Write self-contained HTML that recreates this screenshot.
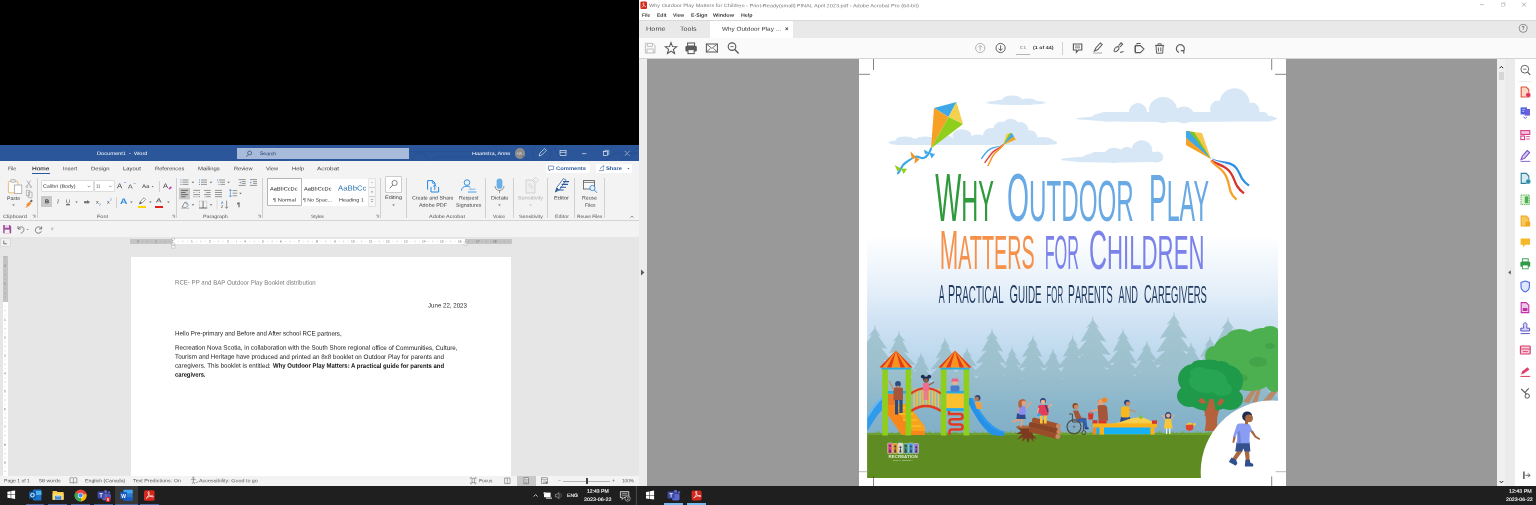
<!DOCTYPE html>
<html lang="en"><head><meta charset="utf-8"><title>Word and Acrobat</title>
<style>
html,body{margin:0;padding:0;background:#000;}
body{width:1536px;height:505px;position:relative;overflow:hidden;font-family:"Liberation Sans",sans-serif;}
#root{position:absolute;left:0;top:0;width:1536px;height:505px;overflow:hidden;will-change:transform;}
.r{position:absolute;}
.t{position:absolute;white-space:pre;line-height:1;transform-origin:0 50%;display:block;}
svg{position:absolute;left:0;top:0;overflow:visible;}
</style></head>
<body>
<div id="root">
<!-- Microsoft Word window -->
<div class="r" style="left:0px;top:145px;width:638.5px;height:16px;background:#2b579a;"></div>
<div class="r" style="left:0px;top:161px;width:638.5px;height:60px;background:#f3f3f3;"></div>
<div class="r" style="left:0px;top:220px;width:638.5px;height:0.8px;background:#d4d4d4;"></div>
<div class="r" style="left:0px;top:221px;width:638.5px;height:16.2px;background:#f3f3f3;"></div>
<div class="r" style="left:0px;top:237.2px;width:638.5px;height:238.8px;background:#e6e6e6;"></div>
<div class="r" style="left:131px;top:257px;width:380px;height:219px;background:#ffffff;"></div>
<div class="r" style="left:0px;top:476px;width:638.5px;height:10px;background:#f3f3f3;"></div>
<div class="r" style="left:0px;top:486px;width:638.5px;height:19px;background:#1f1f1f;"></div>
<span class="t" style="left:96.75px;top:151px;font-size:4.9px;color:#fff;transform:translateY(0.92px) scaleX(1.1542) rotate(0.05deg);">Document1  -  Word</span>
<div class="r" style="left:237px;top:148.3px;width:172px;height:11px;background:#a8bbdb;"></div>
<span class="t" style="left:260.00px;top:152px;font-size:4.9px;color:#1f3864;transform:translateY(0.12px) scaleX(1.0305) rotate(0.05deg);">Search</span>
<span class="t" style="left:471.50px;top:151px;font-size:4.9px;color:#fff;transform:translateY(0.92px) scaleX(1.1397) rotate(0.05deg);">Haanstra, Anne</span>
<div class="r" style="left:514.6px;top:148.4px;width:10.4px;height:10.4px;border-radius:50%;background:#8c8c8c"></div>
<span class="t" style="left:517.30px;top:152px;font-size:3.6px;color:#e8e8e8;transform:translateY(0.72px) rotate(0.05deg);">HA</span>
<span class="t" style="left:8.30px;top:166px;font-size:5.1px;color:#3b3b3b;transform:translateY(0.28px) scaleX(0.9735) rotate(0.05deg);">File</span>
<span class="t" style="left:32.00px;top:166px;font-size:5.1px;color:#1b1b1b;transform:translateY(0.28px) scaleX(1.2863) rotate(0.05deg);-webkit-text-stroke:0.08px #1b1b1b;">Home</span>
<span class="t" style="left:62.70px;top:166px;font-size:5.1px;color:#3b3b3b;transform:translateY(0.28px) scaleX(1.0976) rotate(0.05deg);">Insert</span>
<span class="t" style="left:90.80px;top:166px;font-size:5.1px;color:#3b3b3b;transform:translateY(0.28px) scaleX(1.1716) rotate(0.05deg);">Design</span>
<span class="t" style="left:122.70px;top:166px;font-size:5.1px;color:#3b3b3b;transform:translateY(0.28px) scaleX(1.1624) rotate(0.05deg);">Layout</span>
<span class="t" style="left:154.70px;top:166px;font-size:5.1px;color:#3b3b3b;transform:translateY(0.28px) scaleX(1.1234) rotate(0.05deg);">References</span>
<span class="t" style="left:197.80px;top:166px;font-size:5.1px;color:#3b3b3b;transform:translateY(0.28px) scaleX(1.1653) rotate(0.05deg);">Mailings</span>
<span class="t" style="left:233.80px;top:166px;font-size:5.1px;color:#3b3b3b;transform:translateY(0.28px) scaleX(1.1063) rotate(0.05deg);">Review</span>
<span class="t" style="left:265.80px;top:166px;font-size:5.1px;color:#3b3b3b;transform:translateY(0.28px) scaleX(1.0946) rotate(0.05deg);">View</span>
<span class="t" style="left:291.50px;top:166px;font-size:5.1px;color:#3b3b3b;transform:translateY(0.28px) scaleX(1.1440) rotate(0.05deg);">Help</span>
<span class="t" style="left:316.80px;top:166px;font-size:5.1px;color:#3b3b3b;transform:translateY(0.28px) scaleX(1.2517) rotate(0.05deg);">Acrobat</span>
<div class="r" style="left:32px;top:173.4px;width:17.8px;height:1.1px;background:#2b579a;"></div>
<div class="r" style="left:545.5px;top:163.6px;width:44.5px;height:9.6px;background:#ffffff;"></div>
<span class="t" style="left:556.00px;top:166px;font-size:5.1px;color:#2b579a;font-weight:700;transform:translateY(0.08px) scaleX(1.1383) rotate(0.05deg);">Comments</span>
<div class="r" style="left:596px;top:163.6px;width:36px;height:9.6px;background:#ffffff;"></div>
<span class="t" style="left:606.00px;top:166px;font-size:5.1px;color:#2b579a;font-weight:700;transform:translateY(0.08px) scaleX(1.1288) rotate(0.05deg);">Share</span>
<span class="t" style="left:3.00px;top:215px;font-size:4.7px;color:#555;transform:translateY(0.06px) scaleX(1.1929) rotate(0.05deg);">Clipboard</span>
<span class="t" style="left:97.00px;top:215px;font-size:4.7px;color:#555;transform:translateY(0.06px) scaleX(1.1696) rotate(0.05deg);">Font</span>
<span class="t" style="left:202.60px;top:215px;font-size:4.7px;color:#555;transform:translateY(0.06px) scaleX(1.1344) rotate(0.05deg);">Paragraph</span>
<span class="t" style="left:311.00px;top:215px;font-size:4.7px;color:#555;transform:translateY(0.06px) scaleX(1.0157) rotate(0.05deg);">Styles</span>
<span class="t" style="left:428.50px;top:215px;font-size:4.7px;color:#555;transform:translateY(0.06px) scaleX(1.1675) rotate(0.05deg);">Adobe Acrobat</span>
<span class="t" style="left:493.00px;top:215px;font-size:4.7px;color:#555;transform:translateY(0.06px) scaleX(1.0436) rotate(0.05deg);">Voice</span>
<span class="t" style="left:518.50px;top:215px;font-size:4.7px;color:#555;transform:translateY(0.06px) scaleX(1.1344) rotate(0.05deg);">Sensitivity</span>
<span class="t" style="left:554.50px;top:215px;font-size:4.7px;color:#555;transform:translateY(0.06px) scaleX(1.1402) rotate(0.05deg);">Editor</span>
<span class="t" style="left:576.50px;top:215px;font-size:4.7px;color:#555;transform:translateY(0.06px) scaleX(1.0276) rotate(0.05deg);">Reuse Files</span>
<div class="r" style="left:37.2px;top:178px;width:0.8px;height:40px;background:#d0d0d0;"></div>
<div class="r" style="left:175.6px;top:178px;width:0.8px;height:40px;background:#d0d0d0;"></div>
<div class="r" style="left:262.1px;top:178px;width:0.8px;height:40px;background:#d0d0d0;"></div>
<div class="r" style="left:380.1px;top:178px;width:0.8px;height:40px;background:#d0d0d0;"></div>
<div class="r" style="left:406.1px;top:178px;width:0.8px;height:40px;background:#d0d0d0;"></div>
<div class="r" style="left:485.1px;top:178px;width:0.8px;height:40px;background:#d0d0d0;"></div>
<div class="r" style="left:513.1px;top:178px;width:0.8px;height:40px;background:#d0d0d0;"></div>
<div class="r" style="left:547.2px;top:178px;width:0.8px;height:40px;background:#d0d0d0;"></div>
<div class="r" style="left:574.1px;top:178px;width:0.8px;height:40px;background:#d0d0d0;"></div>
<div class="r" style="left:603.9px;top:178px;width:0.8px;height:40px;background:#d0d0d0;"></div>
<span class="t" style="left:7.00px;top:195px;font-size:5px;color:#444;transform:translateY(0.95px) scaleX(1.0167) rotate(0.05deg);">Paste</span>
<div class="r" style="left:41.5px;top:181px;width:51px;height:10.3px;background:#fff;box-shadow:0 0 0 0.5px #c6c6c6;"></div>
<span class="t" style="left:43.30px;top:184px;font-size:4.8px;color:#333;transform:translateY(0.79px) scaleX(1.1178) rotate(0.05deg);">Calibri (Body)</span>
<div class="r" style="left:94.5px;top:181px;width:19px;height:10.3px;background:#fff;box-shadow:0 0 0 0.5px #c6c6c6;"></div>
<span class="t" style="left:96.20px;top:184px;font-size:4.8px;color:#333;transform:translateY(0.79px) scaleX(0.8429) rotate(0.05deg);">11</span>
<span class="t" style="left:117.00px;top:182px;font-size:7px;color:#444;transform:translateY(0.17px) scaleX(1.1137) rotate(0.05deg);">A</span>
<span class="t" style="left:128.00px;top:184px;font-size:5.8px;color:#444;transform:translateY(0.40px) scaleX(1.1890) rotate(0.05deg);">A</span>
<span class="t" style="left:142.00px;top:184px;font-size:5.6px;color:#444;transform:translateY(0.04px) scaleX(1.0949) rotate(0.05deg);">Aa</span>
<span class="t" style="left:163.00px;top:183px;font-size:6.6px;color:#444;transform:translateY(0.05px) scaleX(1.1357) rotate(0.05deg);">A</span>
<div class="r" style="left:159.2px;top:180.5px;width:0.7px;height:11px;background:#d0d0d0;"></div>
<div class="r" style="left:41px;top:196px;width:11.2px;height:11px;background:#c8c8c8;"></div>
<span class="t" style="left:44.58px;top:199px;font-size:5.6px;color:#222;font-weight:700;transform:translateY(0.34px) rotate(0.05deg);">B</span>
<span class="t" style="left:56.82px;top:199px;font-size:5.6px;color:#444;font-style:italic;transform:translateY(0.34px) rotate(0.05deg);font-family:'Liberation Serif',serif;">I</span>
<span class="t" style="left:66.05px;top:199px;font-size:5.4px;color:#444;transform:translateY(0.27px) rotate(0.05deg);text-decoration:underline;">U</span>
<span class="t" style="left:84.33px;top:200px;font-size:4.8px;color:#444;transform:translateY(0.49px) rotate(0.05deg);text-decoration:line-through;">ab</span>
<span class="t" style="left:96.00px;top:199px;font-size:5.4px;color:#444;transform:translateY(0.67px) rotate(0.05deg);">x</span>
<span class="t" style="left:99.30px;top:203px;font-size:3.2px;color:#2b7cd3;transform:translateY(0.39px) rotate(0.05deg);">2</span>
<span class="t" style="left:107.00px;top:199px;font-size:5.4px;color:#444;transform:translateY(0.67px) rotate(0.05deg);">x</span>
<span class="t" style="left:110.30px;top:198px;font-size:3.2px;color:#2b7cd3;transform:translateY(0.39px) rotate(0.05deg);">2</span>
<div class="r" style="left:116.3px;top:196.5px;width:0.7px;height:11px;background:#d0d0d0;"></div>
<span class="t" style="left:120.00px;top:197px;font-size:8px;color:#2f8be0;font-weight:700;transform:translateY(0.88px) scaleX(1.2808) rotate(0.05deg);">A</span>
<span class="t" style="left:156.00px;top:197px;font-size:6.2px;color:#444;transform:translateY(0.52px) scaleX(1.3541) rotate(0.05deg);">A</span>
<div class="r" style="left:155px;top:205.8px;width:8px;height:1.8px;background:#e0201b;"></div>
<div class="r" style="left:137.5px;top:205.8px;width:8px;height:1.8px;background:#ffd400;"></div>
<span class="t" style="left:236.53px;top:201px;font-size:6px;color:#444;font-weight:700;transform:translateY(0.46px) rotate(0.05deg);">¶</span>
<span class="t" style="left:221.00px;top:201px;font-size:3.4px;color:#2b7cd3;font-weight:700;transform:translateY(0.65px) rotate(0.05deg);">A</span>
<span class="t" style="left:221.00px;top:205px;font-size:3.4px;color:#444;font-weight:700;transform:translateY(0.65px) rotate(0.05deg);">Z</span>
<div class="r" style="left:267.7px;top:178.6px;width:107.6px;height:27px;background:#fff;"></div>
<div class="r" style="left:268px;top:179px;width:32.6px;height:26.2px;background:#fff;box-shadow:0 0 0 0.7px #9a9a9a;"></div>
<span class="t" style="left:270.40px;top:186px;font-size:5.2px;color:#222;transform:translateY(0.41px) scaleX(1.0813) rotate(0.05deg);">AaBbCcDc</span>
<span class="t" style="left:272.50px;top:198px;font-size:4.8px;color:#333;transform:translateY(0.49px) scaleX(1.1867) rotate(0.05deg);">¶ Normal</span>
<span class="t" style="left:304.00px;top:186px;font-size:5.2px;color:#222;transform:translateY(0.41px) scaleX(1.0813) rotate(0.05deg);">AaBbCcDc</span>
<span class="t" style="left:303.00px;top:198px;font-size:4.8px;color:#333;transform:translateY(0.49px) scaleX(1.1017) rotate(0.05deg);">¶ No Spac...</span>
<span class="t" style="left:338.00px;top:184px;font-size:7.2px;color:#2e74b5;transform:translateY(0.43px) scaleX(1.0790) rotate(0.05deg);">AaBbCc</span>
<span class="t" style="left:339.00px;top:198px;font-size:4.8px;color:#333;transform:translateY(0.49px) scaleX(1.1424) rotate(0.05deg);">Heading 1</span>
<div class="r" style="left:368.6px;top:178.6px;width:6.7px;height:27px;background:#f6f6f6;box-shadow:0 0 0 0.5px #d0d0d0;"></div>
<div class="r" style="left:368.8px;top:187.4px;width:6.5px;height:0.5px;background:#d0d0d0;"></div>
<div class="r" style="left:368.8px;top:196.4px;width:6.5px;height:0.5px;background:#d0d0d0;"></div>
<div class="r" style="left:386px;top:177.4px;width:14.6px;height:14.2px;background:#fff;box-shadow:0 0 0 0.6px #b4b4b4;"></div>
<span class="t" style="left:385.00px;top:194px;font-size:5px;color:#444;transform:translateY(0.95px) scaleX(1.1119) rotate(0.05deg);">Editing</span>
<span class="t" style="left:411.50px;top:195px;font-size:5px;color:#444;transform:translateY(0.55px) scaleX(1.0514) rotate(0.05deg);">Create and Share</span>
<span class="t" style="left:418.50px;top:202px;font-size:5px;color:#444;transform:translateY(0.75px) scaleX(1.0833) rotate(0.05deg);">Adobe PDF</span>
<span class="t" style="left:459.00px;top:195px;font-size:5px;color:#444;transform:translateY(0.55px) scaleX(1.0471) rotate(0.05deg);">Request</span>
<span class="t" style="left:455.50px;top:202px;font-size:5px;color:#444;transform:translateY(0.75px) scaleX(1.0584) rotate(0.05deg);">Signatures</span>
<span class="t" style="left:491.00px;top:195px;font-size:5px;color:#444;transform:translateY(0.55px) scaleX(1.1246) rotate(0.05deg);">Dictate</span>
<span class="t" style="left:518.00px;top:195px;font-size:5px;color:#b0b0b0;transform:translateY(0.55px) scaleX(1.1107) rotate(0.05deg);">Sensitivity</span>
<span class="t" style="left:554.00px;top:195px;font-size:5px;color:#444;transform:translateY(0.55px) scaleX(1.1484) rotate(0.05deg);">Editor</span>
<span class="t" style="left:582.00px;top:195px;font-size:5px;color:#444;transform:translateY(0.55px) scaleX(1.0378) rotate(0.05deg);">Reuse</span>
<span class="t" style="left:584.50px;top:202px;font-size:5px;color:#444;transform:translateY(0.75px) scaleX(0.9946) rotate(0.05deg);">Files</span>
<div class="r" style="left:129.5px;top:238.6px;width:382.2px;height:5.8px;background:#c4c4c4;"></div>
<div class="r" style="left:173.3px;top:238.6px;width:292.2px;height:5.8px;background:#ffffff;"></div>
<div class="r" style="left:2.9px;top:255.7px;width:4.7px;height:220.3px;background:#ffffff;"></div>
<div class="r" style="left:2.9px;top:255.7px;width:4.7px;height:45.9px;background:#c4c4c4;"></div>
<div class="r" style="left:0.8px;top:238.8px;width:9.2px;height:7.7px;background:#f0f0f0;box-shadow:0 0 0 0.5px #cfcfcf;"></div>
<span class="t" style="left:190.93px;top:240px;font-size:3.3px;color:#666;transform:translateY(0.52px) rotate(0.05deg);">1</span>
<span class="t" style="left:208.78px;top:240px;font-size:3.3px;color:#666;transform:translateY(0.52px) rotate(0.05deg);">2</span>
<span class="t" style="left:226.63px;top:240px;font-size:3.3px;color:#666;transform:translateY(0.52px) rotate(0.05deg);">3</span>
<span class="t" style="left:244.48px;top:240px;font-size:3.3px;color:#666;transform:translateY(0.52px) rotate(0.05deg);">4</span>
<span class="t" style="left:262.33px;top:240px;font-size:3.3px;color:#666;transform:translateY(0.52px) rotate(0.05deg);">5</span>
<span class="t" style="left:280.18px;top:240px;font-size:3.3px;color:#666;transform:translateY(0.52px) rotate(0.05deg);">6</span>
<span class="t" style="left:298.03px;top:240px;font-size:3.3px;color:#666;transform:translateY(0.52px) rotate(0.05deg);">7</span>
<span class="t" style="left:315.88px;top:240px;font-size:3.3px;color:#666;transform:translateY(0.52px) rotate(0.05deg);">8</span>
<span class="t" style="left:333.73px;top:240px;font-size:3.3px;color:#666;transform:translateY(0.52px) rotate(0.05deg);">9</span>
<span class="t" style="left:350.66px;top:240px;font-size:3.3px;color:#666;transform:translateY(0.52px) rotate(0.05deg);">10</span>
<span class="t" style="left:368.64px;top:240px;font-size:3.3px;color:#666;transform:translateY(0.52px) rotate(0.05deg);">11</span>
<span class="t" style="left:386.36px;top:240px;font-size:3.3px;color:#666;transform:translateY(0.52px) rotate(0.05deg);">12</span>
<span class="t" style="left:404.21px;top:240px;font-size:3.3px;color:#666;transform:translateY(0.52px) rotate(0.05deg);">13</span>
<span class="t" style="left:422.06px;top:240px;font-size:3.3px;color:#666;transform:translateY(0.52px) rotate(0.05deg);">14</span>
<span class="t" style="left:439.91px;top:240px;font-size:3.3px;color:#666;transform:translateY(0.52px) rotate(0.05deg);">15</span>
<span class="t" style="left:457.76px;top:240px;font-size:3.3px;color:#666;transform:translateY(0.52px) rotate(0.05deg);">16</span>
<span class="t" style="left:155.23px;top:240px;font-size:3.3px;color:#666;transform:translateY(0.52px) rotate(0.05deg);">1</span>
<span class="t" style="left:137.38px;top:240px;font-size:3.3px;color:#666;transform:translateY(0.52px) rotate(0.05deg);">2</span>
<span class="t" style="left:475.61px;top:240px;font-size:3.3px;color:#666;transform:translateY(0.52px) rotate(0.05deg);">17</span>
<span class="t" style="left:493.46px;top:240px;font-size:3.3px;color:#666;transform:translateY(0.52px) rotate(0.05deg);">18</span>
<span class="t" style="left:4.18px;top:265px;font-size:3.3px;color:#666;transform:translateY(0.02px) rotate(0.05deg);">2</span>
<span class="t" style="left:4.18px;top:282px;font-size:3.3px;color:#666;transform:translateY(0.87px) rotate(0.05deg);">1</span>
<span class="t" style="left:4.18px;top:318px;font-size:3.3px;color:#666;transform:translateY(0.97px) rotate(0.05deg);">1</span>
<span class="t" style="left:4.18px;top:336px;font-size:3.3px;color:#666;transform:translateY(0.82px) rotate(0.05deg);">2</span>
<span class="t" style="left:4.18px;top:354px;font-size:3.3px;color:#666;transform:translateY(0.67px) rotate(0.05deg);">3</span>
<span class="t" style="left:4.18px;top:372px;font-size:3.3px;color:#666;transform:translateY(0.52px) rotate(0.05deg);">4</span>
<span class="t" style="left:4.18px;top:390px;font-size:3.3px;color:#666;transform:translateY(0.37px) rotate(0.05deg);">5</span>
<span class="t" style="left:4.18px;top:408px;font-size:3.3px;color:#666;transform:translateY(0.22px) rotate(0.05deg);">6</span>
<span class="t" style="left:4.18px;top:426px;font-size:3.3px;color:#666;transform:translateY(0.07px) rotate(0.05deg);">7</span>
<span class="t" style="left:4.18px;top:443px;font-size:3.3px;color:#666;transform:translateY(0.92px) rotate(0.05deg);">8</span>
<span class="t" style="left:4.18px;top:461px;font-size:3.3px;color:#666;transform:translateY(0.77px) rotate(0.05deg);">9</span>
<span class="t" style="left:175.00px;top:279px;font-size:6.45px;color:#7a7a7a;transform:translateY(0.60px) scaleX(0.9469) rotate(0.05deg);">RCE- PP and BAP Outdoor Play Booklet distribution</span>
<span class="t" style="left:427.50px;top:302px;font-size:6.45px;color:#333;transform:translateY(0.60px) scaleX(0.9539) rotate(0.05deg);">June 22, 2023</span>
<span class="t" style="left:175.00px;top:330px;font-size:6.45px;color:#222;transform:translateY(0.50px) scaleX(0.9585) rotate(0.05deg);">Hello Pre-primary and Before and After school RCE partners,</span>
<span class="t" style="left:175.00px;top:344px;font-size:6.45px;color:#222;transform:translateY(0.70px) scaleX(0.9725) rotate(0.05deg);">Recreation Nova Scotia, in collaboration with the South Shore regional office of Communities, Culture,</span>
<span class="t" style="left:175.00px;top:353px;font-size:6.45px;color:#222;transform:translateY(0.80px) scaleX(0.9723) rotate(0.05deg);">Tourism and Heritage have produced and printed an 8x8 booklet on Outdoor Play for parents and</span>
<span class="t" style="left:175.00px;top:362px;font-size:6.45px;color:#222;transform:translateY(0.80px) scaleX(0.9690) rotate(0.05deg);">caregivers. This booklet is entitled: </span>
<span class="t" style="left:272.80px;top:362px;font-size:6.45px;color:#111;font-weight:700;transform:translateY(0.80px) scaleX(0.9280) rotate(0.05deg);">Why Outdoor Play Matters: A practical guide for parents and</span>
<span class="t" style="left:175.00px;top:371px;font-size:6.45px;color:#111;font-weight:700;transform:translateY(0.80px) scaleX(0.8953) rotate(0.05deg);">caregivers.</span>
<span class="t" style="left:3.80px;top:479px;font-size:4.7px;color:#555;transform:translateY(0.26px) scaleX(1.0814) rotate(0.05deg);">Page 1 of 1</span>
<span class="t" style="left:39.00px;top:479px;font-size:4.7px;color:#555;transform:translateY(0.26px) scaleX(1.1431) rotate(0.05deg);">58 words</span>
<span class="t" style="left:84.60px;top:479px;font-size:4.7px;color:#555;transform:translateY(0.26px) scaleX(1.1124) rotate(0.05deg);">English (Canada)</span>
<span class="t" style="left:133.30px;top:479px;font-size:4.7px;color:#555;transform:translateY(0.26px) scaleX(1.1413) rotate(0.05deg);">Text Predictions: On</span>
<span class="t" style="left:199.00px;top:479px;font-size:4.7px;color:#555;transform:translateY(0.26px) scaleX(1.1464) rotate(0.05deg);">Accessibility: Good to go</span>
<span class="t" style="left:479.40px;top:479px;font-size:4.7px;color:#555;transform:translateY(0.26px) scaleX(1.0626) rotate(0.05deg);">Focus</span>
<span class="t" style="left:622.00px;top:479px;font-size:4.7px;color:#555;transform:translateY(0.26px) rotate(0.05deg);">100%</span>
<div class="r" style="left:517.3px;top:476px;width:18.3px;height:10px;background:#c8c8c8;"></div>
<div class="r" style="left:563px;top:480.6px;width:47px;height:0.6px;background:#b5b5b5;"></div>
<div class="r" style="left:586px;top:477.8px;width:1.5px;height:5.8px;background:#444;"></div>
<span class="t" style="left:557.54px;top:478px;font-size:5px;color:#444;transform:translateY(0.15px) rotate(0.05deg);">−</span>
<span class="t" style="left:612.34px;top:478px;font-size:5px;color:#444;transform:translateY(0.15px) rotate(0.05deg);">+</span>
<div class="r" style="left:115px;top:486px;width:22.5px;height:19px;background:#383838;"></div>
<div class="r" style="left:26px;top:503.5px;width:18px;height:1.5px;background:#4a69a8;"></div>
<div class="r" style="left:48px;top:503.5px;width:19px;height:1.5px;background:#4a69a8;"></div>
<div class="r" style="left:71px;top:503.5px;width:19px;height:1.5px;background:#4a69a8;"></div>
<div class="r" style="left:94px;top:503.5px;width:19px;height:1.5px;background:#4a69a8;"></div>
<div class="r" style="left:115px;top:503.5px;width:22.5px;height:1.5px;background:#4a69a8;"></div>
<div class="r" style="left:140px;top:503.5px;width:19px;height:1.5px;background:#4a69a8;"></div>
<span class="t" style="left:567.00px;top:494px;font-size:4.8px;color:#fff;transform:translateY(0.09px) scaleX(1.0575) rotate(0.05deg);-webkit-text-stroke:0.1px #fff;">ENG</span>
<span class="t" style="left:587.35px;top:488px;font-size:5px;color:#fff;transform:translateY(0.75px) scaleX(1.0139) rotate(0.05deg);-webkit-text-stroke:0.12px #fff;">12:43 PM</span>
<span class="t" style="left:583.55px;top:497px;font-size:5px;color:#fff;transform:translateY(0.05px) scaleX(1.0752) rotate(0.05deg);-webkit-text-stroke:0.12px #fff;">2023-06-22</span>
<!-- Adobe Acrobat window -->
<div class="r" style="left:639px;top:0px;width:897px;height:20px;background:#ffffff;"></div>
<div class="r" style="left:639px;top:19.8px;width:897px;height:0.7px;background:#d9d9d9;"></div>
<div class="r" style="left:639px;top:20.5px;width:897px;height:17.2px;background:#e9e9e9;"></div>
<div class="r" style="left:710px;top:20.5px;width:82.7px;height:17.4px;background:#ffffff;"></div>
<div class="r" style="left:639px;top:37.7px;width:897px;height:20.6px;background:#fafafa;"></div>
<div class="r" style="left:639px;top:58.1px;width:897px;height:0.6px;background:#d4d4d4;"></div>
<div class="r" style="left:639px;top:58.6px;width:897px;height:427.4px;background:#999999;"></div>
<div class="r" style="left:638.5px;top:58.6px;width:8.6px;height:427.4px;background:#ececec;"></div>
<div class="r" style="left:1497.4px;top:58.6px;width:8px;height:427.4px;background:#f0f0f0;"></div>
<div class="r" style="left:1498.6px;top:71.5px;width:5.6px;height:8.3px;background:#d6d6d6;"></div>
<div class="r" style="left:1505.2px;top:58.6px;width:9.4px;height:427.4px;background:#ebebeb;"></div>
<div class="r" style="left:1514.5px;top:58.6px;width:21.5px;height:427.4px;background:#ffffff;"></div>
<div class="r" style="left:639px;top:486px;width:897px;height:19px;background:#1f1f1f;"></div>
<div class="r" style="left:858.8px;top:59px;width:427.2px;height:427px;background:#ffffff;"></div>
<span class="t" style="left:649.00px;top:4px;font-size:4.7px;color:#7a7a7a;transform:translateY(0.06px) scaleX(1.1871) rotate(0.05deg);">Why Outdoor Play Matters for Children - Print-Ready(small) FINAL April 2023.pdf - Adobe Acrobat Pro (64-bit)</span>
<span class="t" style="left:641.90px;top:13px;font-size:4.9px;color:#333;font-weight:700;transform:translateY(0.82px) scaleX(0.9596) rotate(0.05deg);">File</span>
<span class="t" style="left:656.50px;top:13px;font-size:4.9px;color:#333;font-weight:700;transform:translateY(0.82px) scaleX(1.0265) rotate(0.05deg);">Edit</span>
<span class="t" style="left:672.60px;top:13px;font-size:4.9px;color:#333;font-weight:700;transform:translateY(0.82px) scaleX(0.9930) rotate(0.05deg);">View</span>
<span class="t" style="left:690.50px;top:13px;font-size:4.9px;color:#333;font-weight:700;transform:translateY(0.82px) scaleX(1.0634) rotate(0.05deg);">E-Sign</span>
<span class="t" style="left:713.00px;top:13px;font-size:4.9px;color:#333;font-weight:700;transform:translateY(0.82px) scaleX(1.1210) rotate(0.05deg);">Window</span>
<span class="t" style="left:740.50px;top:13px;font-size:4.9px;color:#333;font-weight:700;transform:translateY(0.82px) scaleX(1.0830) rotate(0.05deg);">Help</span>
<span class="t" style="left:646.00px;top:25px;font-size:6px;color:#444;transform:translateY(0.76px) scaleX(1.2246) rotate(0.05deg);">Home</span>
<span class="t" style="left:680.00px;top:25px;font-size:6px;color:#444;transform:translateY(0.76px) scaleX(1.1780) rotate(0.05deg);">Tools</span>
<span class="t" style="left:721.80px;top:26px;font-size:5.6px;color:#333;transform:translateY(0.74px) scaleX(1.1420) rotate(0.05deg);">Why Outdoor Play ...</span>
<span class="t" style="left:785.25px;top:25px;font-size:6px;color:#333;font-weight:700;transform:translateY(0.66px) rotate(0.05deg);">×</span>
<span class="t" style="left:1019.50px;top:45px;font-size:4px;color:#666;transform:translateY(0.64px) scaleX(1.1734) rotate(0.05deg);">C1</span>
<div class="r" style="left:1016px;top:53.8px;width:14px;height:0.6px;background:#b5b5b5;"></div>
<span class="t" style="left:1033.00px;top:46px;font-size:4.5px;color:#333;font-weight:700;transform:translateY(0.10px) scaleX(1.1882) rotate(0.05deg);">(1 of 44)</span>
<div class="r" style="left:1062px;top:41.5px;width:0.6px;height:13px;background:#d0d0d0;"></div>
<div class="r" style="left:664.4px;top:503.4px;width:18.300000000000068px;height:1.6px;background:#76b9ed;"></div>
<div class="r" style="left:687px;top:503.4px;width:19px;height:1.6px;background:#76b9ed;"></div>
<span class="t" style="left:1508.65px;top:488px;font-size:5px;color:#fff;transform:translateY(0.85px) scaleX(1.0607) rotate(0.05deg);-webkit-text-stroke:0.12px #fff;">12:43 PM</span>
<span class="t" style="left:1506.35px;top:496px;font-size:5px;color:#fff;transform:translateY(0.95px) scaleX(1.0439) rotate(0.05deg);-webkit-text-stroke:0.12px #fff;">2023-06-22</span>
<!-- PDF cover illustration -->
<svg width="1536" height="505" viewBox="0 0 1536 505">
<defs>
<linearGradient id="sky" gradientUnits="userSpaceOnUse" x1="0" y1="59" x2="0" y2="435">
<stop offset="0.0000" stop-color="#ffffff"/><stop offset="0.4681" stop-color="#ffffff"/><stop offset="0.5346" stop-color="#f3f8fc"/><stop offset="0.6144" stop-color="#e5eff9"/><stop offset="0.6941" stop-color="#d0e3f4"/><stop offset="0.7739" stop-color="#c0daee"/><stop offset="0.8404" stop-color="#b2d1e7"/><stop offset="0.8936" stop-color="#9fc5dc"/><stop offset="0.9468" stop-color="#8cb8cf"/><stop offset="1.0000" stop-color="#86b3cb"/>
</linearGradient>
<linearGradient id="trees" gradientUnits="userSpaceOnUse" x1="0" y1="310" x2="0" y2="435">
<stop offset="0" stop-color="#a8c8d3"/><stop offset="0.5" stop-color="#9bbfcd"/><stop offset="0.78" stop-color="#89b5ca"/><stop offset="1" stop-color="#81afc8"/>
</linearGradient>
<clipPath id="cv"><rect x="867.1" y="59" width="411" height="418.9"/></clipPath>
</defs>
<g clip-path="url(#cv)">
<rect x="867.1" y="59" width="411" height="376" fill="url(#sky)"/>
<g fill="#d7e7f6"><ellipse cx="1016" cy="102.6" rx="30" ry="2.4"/><ellipse cx="1012" cy="100" rx="10" ry="4.6"/><ellipse cx="1028" cy="101.6" rx="9" ry="3"/><ellipse cx="1001" cy="102" rx="7" ry="2.2"/></g>
<g fill="#d7e7f6"><rect x="897" y="138.4" width="154" height="6.6" rx="3.3"/><ellipse cx="905" cy="139.4" rx="9" ry="3"/><ellipse cx="925" cy="139.6" rx="9" ry="3.2"/><ellipse cx="944" cy="138.6" rx="9" ry="3.4"/><ellipse cx="962" cy="135.6" rx="9.5" ry="6.4"/><ellipse cx="978" cy="139" rx="8" ry="4.6"/><ellipse cx="991" cy="136" rx="8" ry="8"/><ellipse cx="1001" cy="130.6" rx="8" ry="9"/><ellipse cx="1010.6" cy="128.8" rx="9.6" ry="10"/><ellipse cx="1020.6" cy="131" rx="8" ry="9"/><ellipse cx="1030" cy="136.6" rx="7" ry="6.4"/><ellipse cx="1042" cy="140.6" rx="11" ry="3.6"/><ellipse cx="900" cy="142.6" rx="11.6" ry="2.4"/><ellipse cx="1052" cy="142.6" rx="5" ry="2"/></g>
<g fill="#d7e7f6"><ellipse cx="1177" cy="118.6" rx="101" ry="3.2"/><rect x="1100" y="112" width="168" height="9.5" rx="4.5"/><ellipse cx="1138" cy="112" rx="9" ry="9"/><ellipse cx="1163" cy="110" rx="14" ry="13"/><ellipse cx="1184" cy="115" rx="10" ry="8.5"/><rect x="1150" y="108" width="40" height="12" rx="5"/><ellipse cx="1202" cy="117" rx="10" ry="5"/><ellipse cx="1218.5" cy="109" rx="8.5" ry="8.5"/><ellipse cx="1234.6" cy="103.6" rx="15" ry="15.4"/><ellipse cx="1252" cy="111" rx="7.5" ry="8.5"/><ellipse cx="1108" cy="117" rx="16" ry="4.4"/><ellipse cx="1266" cy="118.5" rx="10" ry="3"/></g>
<g fill="#d7e7f6"><ellipse cx="1112" cy="159.4" rx="51" ry="3.2"/><rect x="1090" y="152" width="70" height="10" rx="5"/><ellipse cx="1141.8" cy="151" rx="10.5" ry="10.8"/><ellipse cx="1127" cy="154" rx="8" ry="7"/><ellipse cx="1114" cy="155.4" rx="10" ry="7.6"/><ellipse cx="1156.6" cy="157" rx="6.6" ry="5.6"/><ellipse cx="1095" cy="157.6" rx="12" ry="4"/></g>
<g fill="url(#trees)">
<path d="M868.0,338.0 L868.8,342.4 L873.9,348.9 L870.9,347.6 L877.9,359.8 L873.0,358.5 L882.6,370.7 L875.3,369.4 L888.2,381.6 L878.1,380.2 L891.0,392.4 L879.5,391.1 L897.9,403.3 L882.9,402.0 L897.6,414.2 L882.8,412.9 L904.3,425.1 L886.1,423.8 L911.1,436.0 L889.5,434.7 L846.1,434.7 L824.3,436.0 L851.4,423.8 L834.9,425.1 L851.4,412.9 L834.8,414.2 L854.4,402.0 L840.8,403.3 L856.2,391.1 L844.4,392.4 L859.0,380.2 L850.0,381.6 L860.9,369.4 L853.7,370.7 L863.2,358.5 L858.5,359.8 L865.1,347.6 L862.2,348.9 L867.2,342.4Z"/>
<path d="M875.0,324.0 L875.8,329.0 L880.7,336.4 L877.8,335.0 L887.3,348.9 L881.2,347.4 L891.6,361.3 L883.3,359.8 L897.4,373.8 L886.2,372.3 L898.8,386.2 L886.9,384.7 L908.6,398.7 L891.8,397.2 L913.0,411.1 L894.0,409.6 L914.8,423.6 L894.9,422.1 L916.9,436.0 L895.9,434.5 L850.2,434.5 L825.4,436.0 L853.8,422.1 L832.6,423.6 L859.3,409.6 L843.5,411.1 L859.7,397.2 L844.4,398.7 L863.3,384.7 L851.6,386.2 L863.5,372.3 L851.9,373.8 L866.8,359.8 L858.5,361.3 L869.6,347.4 L864.1,348.9 L871.6,335.0 L868.3,336.4 L874.2,329.0Z"/>
<path d="M899.0,330.0 L899.8,334.7 L905.5,341.8 L902.3,340.4 L908.8,353.6 L903.9,352.1 L916.0,365.3 L907.5,363.9 L920.3,377.1 L909.6,375.7 L924.6,388.9 L911.8,387.5 L929.0,400.7 L914.0,399.3 L932.3,412.4 L915.6,411.0 L939.2,424.2 L919.1,422.8 L946.0,436.0 L922.5,434.6 L877.6,434.6 L856.2,436.0 L877.7,422.8 L856.3,424.2 L882.5,411.0 L866.0,412.4 L885.5,399.3 L872.0,400.7 L886.2,387.5 L873.4,388.9 L889.3,375.7 L879.5,377.1 L890.7,363.9 L882.3,365.3 L894.1,352.1 L889.1,353.6 L895.8,340.4 L892.5,341.8 L898.2,334.7Z"/>
<path d="M921.0,352.0 L921.8,355.7 L925.4,361.3 L923.2,360.2 L929.4,370.7 L925.2,369.5 L933.9,380.0 L927.4,378.9 L935.3,389.3 L928.2,388.2 L939.7,398.7 L930.3,397.5 L947.1,408.0 L934.1,406.9 L950.0,417.3 L935.5,416.2 L952.2,426.7 L936.6,425.5 L955.7,436.0 L938.3,434.9 L902.7,434.9 L884.4,436.0 L907.2,425.5 L893.3,426.7 L907.7,416.2 L894.4,417.3 L909.4,406.9 L897.8,408.0 L911.7,397.5 L902.5,398.7 L912.2,388.2 L903.5,389.3 L915.4,378.9 L909.8,380.0 L916.6,369.5 L912.1,370.7 L918.6,360.2 L916.3,361.3 L920.2,355.7Z"/>
<path d="M945.0,336.5 L945.8,340.9 L950.2,347.6 L947.6,346.2 L955.0,358.6 L950.0,357.3 L958.3,369.7 L951.6,368.3 L966.1,380.7 L955.6,379.4 L969.9,391.8 L957.5,390.5 L972.9,402.8 L958.9,401.5 L974.2,413.9 L959.6,412.6 L978.3,424.9 L961.7,423.6 L987.9,436.0 L966.5,434.7 L923.6,434.7 L902.3,436.0 L925.3,423.6 L905.5,424.9 L930.6,412.6 L916.3,413.9 L931.9,401.5 L918.8,402.8 L934.1,390.5 L923.1,391.8 L934.7,379.4 L924.4,380.7 L937.8,368.3 L930.5,369.7 L940.3,357.3 L935.6,358.6 L942.5,346.2 L940.0,347.6 L944.2,340.9Z"/>
<path d="M967.0,347.0 L967.8,351.0 L972.1,356.9 L969.5,355.7 L976.8,366.8 L971.9,365.6 L981.0,376.7 L974.0,375.5 L982.2,386.6 L974.6,385.4 L990.2,396.4 L978.6,395.3 L994.1,406.3 L980.5,405.1 L995.2,416.2 L981.1,415.0 L999.4,426.1 L983.2,424.9 L998.4,436.0 L982.7,434.8 L950.4,434.8 L933.8,436.0 L950.7,424.9 L934.4,426.1 L953.7,415.0 L940.3,416.2 L955.8,405.1 L944.6,406.3 L956.1,395.3 L945.3,396.4 L958.5,385.4 L950.0,386.6 L959.7,375.5 L952.4,376.7 L961.9,365.6 L956.8,366.8 L964.4,355.7 L961.8,356.9 L966.2,351.0Z"/>
<path d="M992.0,327.6 L992.8,332.4 L998.4,339.6 L995.2,338.2 L1003.2,351.7 L997.6,350.2 L1006.2,363.7 L999.1,362.3 L1012.7,375.8 L1002.4,374.3 L1016.8,387.8 L1004.4,386.4 L1020.5,399.9 L1006.2,398.4 L1028.5,411.9 L1010.2,410.5 L1031.4,424.0 L1011.7,422.5 L1032.2,436.0 L1012.1,434.6 L970.0,434.6 L948.1,436.0 L971.6,422.5 L951.3,424.0 L975.1,410.5 L958.1,411.9 L975.9,398.4 L959.7,399.9 L978.4,386.4 L964.8,387.8 L980.9,374.3 L969.8,375.8 L983.6,362.3 L975.2,363.7 L986.7,350.2 L981.4,351.7 L988.8,338.2 L985.5,339.6 L991.2,332.4Z"/>
<path d="M1012.0,346.0 L1012.8,350.0 L1016.8,356.0 L1014.4,354.8 L1021.6,366.0 L1016.8,364.8 L1025.5,376.0 L1018.8,374.8 L1027.5,386.0 L1019.8,384.8 L1030.9,396.0 L1021.4,394.8 L1034.4,406.0 L1023.2,404.8 L1040.2,416.0 L1026.1,414.8 L1041.5,426.0 L1026.7,424.8 L1049.1,436.0 L1030.6,434.8 L992.1,434.8 L972.1,436.0 L996.9,424.8 L981.8,426.0 L996.5,414.8 L981.0,416.0 L1000.7,404.8 L989.5,406.0 L1001.6,394.8 L991.1,396.0 L1003.3,384.8 L994.6,386.0 L1005.5,374.8 L999.0,376.0 L1007.8,364.8 L1003.7,366.0 L1009.7,354.8 L1007.4,356.0 L1011.2,350.0Z"/>
<path d="M1033.0,334.6 L1033.8,339.1 L1038.2,345.9 L1035.6,344.5 L1042.5,357.1 L1037.8,355.8 L1046.6,368.4 L1039.8,367.0 L1054.9,379.7 L1043.9,378.3 L1057.7,390.9 L1045.4,389.6 L1060.8,402.2 L1046.9,400.8 L1063.0,413.5 L1048.0,412.1 L1065.9,424.7 L1049.4,423.4 L1068.9,436.0 L1050.9,434.6 L1013.9,434.6 L994.7,436.0 L1015.9,423.4 L998.8,424.7 L1015.5,412.1 L998.1,413.5 L1018.9,400.8 L1004.9,402.2 L1021.2,389.6 L1009.3,390.9 L1023.9,378.3 L1014.8,379.7 L1025.9,367.0 L1018.8,368.4 L1027.5,355.8 L1022.0,357.1 L1029.9,344.5 L1026.8,345.9 L1032.2,339.1Z"/>
<path d="M1053.0,348.0 L1053.8,351.9 L1057.8,357.8 L1055.4,356.6 L1061.3,367.6 L1057.2,366.4 L1064.5,377.3 L1058.8,376.2 L1071.6,387.1 L1062.3,385.9 L1074.0,396.9 L1063.5,395.7 L1074.7,406.7 L1063.9,405.5 L1082.4,416.4 L1067.7,415.3 L1086.4,426.2 L1069.7,425.0 L1086.0,436.0 L1069.5,434.8 L1037.0,434.8 L1021.1,436.0 L1038.5,425.0 L1023.9,426.2 L1039.1,415.3 L1025.2,416.4 L1041.1,405.5 L1029.3,406.7 L1042.3,395.7 L1031.7,396.9 L1045.4,385.9 L1037.7,387.1 L1046.4,376.2 L1039.9,377.3 L1048.1,366.4 L1043.1,367.6 L1050.6,356.6 L1048.3,357.8 L1052.2,351.9Z"/>
<path d="M1072.6,334.6 L1073.4,339.1 L1078.3,345.9 L1075.5,344.5 L1083.3,357.1 L1077.9,355.8 L1088.8,368.4 L1080.7,367.0 L1092.9,379.7 L1082.7,378.3 L1096.6,390.9 L1084.6,389.6 L1099.1,402.2 L1085.8,400.8 L1108.8,413.5 L1090.7,412.1 L1112.2,424.7 L1092.4,423.4 L1112.0,436.0 L1092.3,434.6 L1053.4,434.6 L1034.1,436.0 L1053.9,423.4 L1035.2,424.7 L1058.2,412.1 L1043.8,413.5 L1057.0,400.8 L1041.4,402.2 L1061.1,389.6 L1049.7,390.9 L1063.6,378.3 L1054.6,379.7 L1064.5,367.0 L1056.3,368.4 L1067.7,355.8 L1062.9,357.1 L1069.8,344.5 L1067.1,345.9 L1071.8,339.1Z"/>
<path d="M1092.8,315.0 L1093.6,320.4 L1099.4,328.4 L1096.1,326.8 L1106.6,341.9 L1099.7,340.3 L1110.8,355.3 L1101.8,353.7 L1114.4,368.8 L1103.6,367.2 L1122.2,382.2 L1107.5,380.6 L1123.1,395.7 L1108.0,394.1 L1127.6,409.1 L1110.2,407.5 L1138.4,422.6 L1115.6,420.9 L1146.8,436.0 L1119.8,434.4 L1065.9,434.4 L1039.0,436.0 L1073.4,420.9 L1054.1,422.6 L1072.1,407.5 L1051.3,409.1 L1076.8,394.1 L1060.8,395.7 L1077.5,380.6 L1062.3,382.2 L1081.1,367.2 L1069.4,368.8 L1083.6,353.7 L1074.4,355.3 L1086.6,340.3 L1080.4,341.9 L1089.4,326.8 L1086.0,328.4 L1092.0,320.4Z"/>
<path d="M1123.0,327.7 L1123.8,332.5 L1129.0,339.7 L1126.0,338.3 L1134.6,351.8 L1128.8,350.3 L1137.2,363.8 L1130.1,362.4 L1142.7,375.8 L1132.9,374.4 L1149.7,387.9 L1136.3,386.4 L1153.5,399.9 L1138.2,398.5 L1154.6,411.9 L1138.8,410.5 L1158.8,424.0 L1140.9,422.5 L1161.7,436.0 L1142.4,434.6 L1099.7,434.6 L1076.4,436.0 L1101.6,422.5 L1080.2,424.0 L1106.0,410.5 L1088.9,411.9 L1107.4,398.5 L1091.8,399.9 L1109.9,386.4 L1096.9,387.9 L1111.8,374.4 L1100.6,375.8 L1115.2,362.4 L1107.4,363.8 L1117.9,350.3 L1112.8,351.8 L1119.9,338.3 L1116.8,339.7 L1122.2,332.5Z"/>
<path d="M1146.9,340.0 L1147.7,344.3 L1151.9,350.7 L1149.4,349.4 L1157.3,361.3 L1152.1,360.1 L1160.1,372.0 L1153.5,370.7 L1163.8,382.7 L1155.4,381.4 L1170.8,393.3 L1158.8,392.1 L1173.8,404.0 L1160.3,402.7 L1176.0,414.7 L1161.5,413.4 L1184.2,425.3 L1165.6,424.1 L1180.8,436.0 L1163.9,434.7 L1128.7,434.7 L1110.6,436.0 L1129.2,424.1 L1111.5,425.3 L1131.8,413.4 L1116.8,414.7 L1134.5,402.7 L1122.1,404.0 L1136.6,392.1 L1126.3,393.3 L1138.3,381.4 L1129.6,382.7 L1140.2,370.7 L1133.5,372.0 L1141.5,360.1 L1136.2,361.3 L1144.1,349.4 L1141.3,350.7 L1146.1,344.3Z"/>
<path d="M1174.0,310.5 L1174.8,316.1 L1180.3,324.4 L1177.1,322.8 L1187.4,338.4 L1180.7,336.7 L1191.7,352.3 L1182.8,350.7 L1199.6,366.3 L1186.8,364.6 L1202.2,380.2 L1188.1,378.5 L1208.0,394.2 L1191.0,392.5 L1210.4,408.1 L1192.2,406.4 L1223.5,422.1 L1198.8,420.4 L1221.3,436.0 L1197.7,434.3 L1147.1,434.3 L1120.1,436.0 L1152.2,420.4 L1130.4,422.1 L1155.3,406.4 L1136.6,408.1 L1155.4,392.5 L1136.8,394.2 L1158.6,378.5 L1143.1,380.2 L1161.4,364.6 L1148.9,366.3 L1165.2,350.7 L1156.4,352.3 L1166.8,336.7 L1159.7,338.4 L1170.4,322.8 L1166.7,324.4 L1173.2,316.1Z"/>
<path d="M1191.0,341.6 L1191.8,345.8 L1196.8,352.1 L1193.9,350.8 L1201.3,362.6 L1196.2,361.3 L1206.7,373.1 L1198.8,371.8 L1210.9,383.6 L1200.9,382.3 L1215.2,394.0 L1203.1,392.8 L1215.6,404.5 L1203.3,403.3 L1222.6,415.0 L1206.8,413.8 L1223.0,425.5 L1207.0,424.3 L1232.0,436.0 L1211.5,434.7 L1170.4,434.7 L1149.8,436.0 L1175.1,424.3 L1159.2,425.5 L1176.7,413.8 L1162.5,415.0 L1178.4,403.3 L1165.8,404.5 L1178.5,392.8 L1166.1,394.0 L1181.5,382.3 L1172.0,383.6 L1184.8,371.8 L1178.6,373.1 L1186.5,361.3 L1182.0,362.6 L1188.7,350.8 L1186.4,352.1 L1190.2,345.8Z"/>
<path d="M1210.0,335.0 L1210.8,339.5 L1215.4,346.2 L1212.7,344.9 L1220.2,357.4 L1215.1,356.1 L1224.7,368.7 L1217.4,367.3 L1228.3,379.9 L1219.2,378.5 L1231.0,391.1 L1220.5,389.8 L1236.9,402.3 L1223.5,401.0 L1244.1,413.6 L1227.1,412.2 L1248.9,424.8 L1229.4,423.4 L1248.0,436.0 L1229.0,434.7 L1187.9,434.7 L1165.8,436.0 L1189.8,423.4 L1169.7,424.8 L1194.6,412.2 L1179.2,413.6 L1197.2,401.0 L1184.4,402.3 L1198.7,389.8 L1187.3,391.1 L1199.9,378.5 L1189.9,379.9 L1202.2,367.3 L1194.4,368.7 L1204.8,356.1 L1199.7,357.4 L1207.2,344.9 L1204.4,346.2 L1209.2,339.5Z"/>
<path d="M1228.0,316.0 L1228.8,321.3 L1234.7,329.3 L1231.3,327.7 L1241.8,342.7 L1234.9,341.1 L1247.0,356.0 L1237.5,354.4 L1252.0,369.3 L1240.0,367.7 L1253.1,382.7 L1240.5,381.1 L1263.3,396.0 L1245.6,394.4 L1266.3,409.3 L1247.1,407.7 L1274.8,422.7 L1251.4,421.1 L1274.9,436.0 L1251.4,434.4 L1201.1,434.4 L1174.3,436.0 L1204.1,421.1 L1180.2,422.7 L1209.7,407.7 L1191.4,409.3 L1212.3,394.4 L1196.7,396.0 L1214.3,381.1 L1200.5,382.7 L1217.5,367.7 L1207.0,369.3 L1218.6,354.4 L1209.3,356.0 L1222.1,341.1 L1216.2,342.7 L1224.4,327.7 L1220.9,329.3 L1227.2,321.3Z"/>
<path d="M1255.0,335.0 L1255.8,339.5 L1260.2,346.2 L1257.6,344.9 L1265.0,357.4 L1260.0,356.1 L1270.0,368.7 L1262.5,367.3 L1274.4,379.9 L1264.7,378.5 L1277.5,391.1 L1266.2,389.8 L1284.3,402.3 L1269.7,401.0 L1288.6,413.6 L1271.8,412.2 L1294.5,424.8 L1274.8,423.4 L1292.8,436.0 L1273.9,434.7 L1236.1,434.7 L1217.1,436.0 L1234.9,423.4 L1214.8,424.8 L1237.8,412.2 L1220.6,413.6 L1241.6,401.0 L1228.1,402.3 L1243.8,389.8 L1232.6,391.1 L1245.4,378.5 L1235.7,379.9 L1247.5,367.3 L1240.0,368.7 L1250.2,356.1 L1245.3,357.4 L1252.1,344.9 L1249.2,346.2 L1254.2,339.5Z"/>
</g>
<g fill="#b98a6a"><path d="M1243,402 L1256,384 L1259,386 L1249,403Z"/><path d="M1262,402 L1276,386 L1280,388 L1268,404Z"/><path d="M1252,402 l6,-14 l3,1 l-4,14z"/></g>
<g fill="#4cb050">
<ellipse cx="1235" cy="352" rx="22" ry="18"/>
<ellipse cx="1262" cy="348" rx="20" ry="20"/>
<ellipse cx="1222" cy="372" rx="16" ry="14"/>
<ellipse cx="1250" cy="375" rx="24" ry="16"/>
<ellipse cx="1274" cy="368" rx="12" ry="24"/>
<ellipse cx="1240" cy="338" rx="14" ry="9"/>
<ellipse cx="1270" cy="334" rx="10" ry="8"/>
<ellipse cx="1214" cy="356" rx="9" ry="10"/>
</g>
<g fill="#43a348"><ellipse cx="1258" cy="362" rx="9" ry="5"/><ellipse cx="1240" cy="378" rx="8" ry="4"/><ellipse cx="1270" cy="346" rx="5" ry="3"/></g>
<rect x="867.1" y="433.4" width="411" height="45" fill="#5f8c22"/>
<path d="M867.4,434.4 L868.5,432.2 L869.6,433.9 L871.0,432.2 L872.3,434.0 L872.9,431.5 L873.6,434.0 L874.7,432.6 L875.8,433.5 L876.8,431.0 L877.7,433.7 L878.8,430.4 L879.9,433.5 L880.7,432.6 L881.5,433.9 L882.2,432.3 L883.0,433.5 L884.1,430.7 L885.1,433.4 L886.4,430.9 L887.7,433.5 L889.1,432.5 L890.5,433.6 L891.9,431.7 L893.3,433.8 L894.0,432.7 L894.8,433.8 L896.2,432.5 L897.5,433.6 L898.4,430.8 L899.3,433.5 L900.0,431.1 L900.6,433.8 L901.2,432.0 L901.8,433.6 L902.7,432.4 L903.5,433.7 L904.4,431.6 L905.2,433.8 L905.9,432.7 L906.5,433.4 L907.7,432.4 L908.9,433.4 L910.1,431.3 L911.4,433.7 L912.0,430.5 L912.6,433.5 L913.9,430.9 L915.3,433.9 L916.7,432.7 L918.0,433.6 L918.9,431.7 L919.8,433.9 L920.5,432.2 L921.1,433.9 L922.4,430.5 L923.7,434.0 L924.4,431.2 L925.1,433.8 L926.4,431.2 L927.7,434.0 L928.8,431.1 L929.8,433.6 L930.5,430.6 L931.3,433.5 L932.4,432.8 L933.6,433.5 L934.2,432.8 L934.9,433.7 L935.8,431.0 L936.7,433.8 L938.0,431.5 L939.2,433.7 L939.9,432.6 L940.5,433.4 L941.5,432.4 L942.5,433.5 L943.7,432.7 L944.9,433.8 L946.1,430.7 L947.3,433.7 L948.1,432.4 L948.8,433.6 L949.7,432.8 L950.7,433.9 L952.1,431.5 L953.5,433.7 L954.7,431.5 L955.8,433.6 L956.8,430.8 L957.7,433.6 L959.1,432.7 L960.5,433.8 L961.5,431.2 L962.5,433.5 L963.3,432.3 L964.1,433.9 L965.0,432.3 L965.9,433.9 L967.0,432.0 L968.2,433.9 L969.1,432.1 L970.0,433.6 L971.0,432.2 L971.9,433.8 L972.8,432.7 L973.6,433.8 L974.7,430.4 L975.7,433.7 L976.5,432.0 L977.3,433.7 L978.6,432.0 L979.9,433.9 L980.7,431.9 L981.6,433.8 L982.9,431.2 L984.1,433.9 L985.4,432.1 L986.7,434.0 L988.1,431.6 L989.5,433.7 L990.2,432.4 L990.9,434.0 L991.9,432.1 L992.9,433.8 L994.1,430.8 L995.3,433.9 L996.3,432.0 L997.4,433.7 L998.5,432.3 L999.6,433.8 L1000.8,430.5 L1001.9,433.5 L1002.9,432.0 L1003.8,433.5 L1005.0,431.9 L1006.1,433.4 L1007.1,430.9 L1008.1,433.4 L1008.8,431.2 L1009.5,433.5 L1010.3,430.5 L1011.0,433.7 L1011.9,431.9 L1012.8,433.8 L1013.6,432.6 L1014.4,433.4 L1015.3,431.1 L1016.3,433.6 L1016.9,432.4 L1017.6,433.6 L1018.3,431.9 L1018.9,433.5 L1019.9,431.2 L1021.0,433.7 L1022.3,432.4 L1023.7,433.7 L1025.0,431.9 L1026.2,433.6 L1026.9,431.8 L1027.6,433.7 L1029.0,432.7 L1030.4,433.8 L1031.2,432.5 L1032.1,433.4 L1032.8,431.8 L1033.5,433.8 L1034.2,431.9 L1034.9,433.9 L1035.8,431.4 L1036.7,433.5 L1037.6,432.7 L1038.4,433.6 L1039.8,432.6 L1041.1,433.8 L1041.9,432.8 L1042.7,433.7 L1043.7,431.2 L1044.6,434.0 L1045.6,431.1 L1046.6,433.7 L1047.3,431.9 L1048.0,433.7 L1048.8,432.3 L1049.7,433.9 L1050.3,431.7 L1050.9,433.6 L1052.2,432.3 L1053.6,433.5 L1054.4,430.8 L1055.2,434.0 L1056.0,431.9 L1056.9,433.7 L1058.0,431.8 L1059.1,433.8 L1059.8,432.2 L1060.5,433.6 L1061.5,431.2 L1062.6,433.6 L1063.6,431.5 L1064.6,433.6 L1065.8,431.8 L1067.0,433.4 L1067.8,431.5 L1068.6,433.9 L1069.9,431.7 L1071.2,433.4 L1072.4,431.4 L1073.7,433.7 L1074.8,431.9 L1076.0,433.7 L1077.3,431.3 L1078.7,433.6 L1079.9,430.9 L1081.2,433.6 L1082.5,430.6 L1083.7,433.9 L1084.9,431.4 L1086.1,433.6 L1087.3,432.6 L1088.5,433.5 L1089.5,431.7 L1090.5,433.7 L1091.3,430.8 L1092.2,433.8 L1093.4,430.6 L1094.7,433.5 L1096.0,432.3 L1097.2,433.8 L1097.8,432.1 L1098.4,434.0 L1099.8,432.1 L1101.2,433.4 L1102.5,430.9 L1103.8,433.8 L1105.2,432.1 L1106.5,433.5 L1107.4,432.6 L1108.2,433.5 L1109.3,431.4 L1110.4,433.5 L1111.5,430.5 L1112.6,433.5 L1113.5,430.6 L1114.4,433.4 L1115.4,432.2 L1116.5,433.9 L1117.2,431.4 L1117.9,433.6 L1119.0,431.6 L1120.1,434.0 L1121.0,430.5 L1121.9,433.8 L1122.6,431.9 L1123.3,433.7 L1124.6,431.7 L1126.0,433.8 L1126.8,431.7 L1127.6,433.6 L1128.8,431.6 L1130.0,433.5 L1130.8,431.3 L1131.6,433.8 L1132.3,432.1 L1133.0,433.8 L1133.7,432.0 L1134.4,433.5 L1135.1,431.8 L1135.8,433.5 L1137.1,431.6 L1138.4,433.6 L1139.6,430.5 L1140.9,433.8 L1141.5,430.8 L1142.1,434.0 L1143.3,430.9 L1144.4,433.5 L1145.8,432.0 L1147.2,433.9 L1147.9,431.9 L1148.6,433.6 L1149.4,431.2 L1150.2,433.8 L1151.1,431.3 L1151.9,433.5 L1153.2,432.0 L1154.5,433.9 L1155.4,432.4 L1156.4,433.7 L1157.4,431.8 L1158.5,433.8 L1159.4,430.6 L1160.3,433.4 L1161.1,430.5 L1161.9,433.9 L1162.9,432.2 L1163.8,433.4 L1164.8,432.5 L1165.8,433.8 L1166.7,431.5 L1167.7,433.5 L1168.4,430.8 L1169.1,433.6 L1170.0,432.5 L1170.9,433.5 L1171.7,431.1 L1172.6,433.5 L1173.4,431.0 L1174.2,433.7 L1174.8,432.6 L1175.5,433.6 L1176.8,432.1 L1178.2,433.8 L1179.1,432.7 L1180.1,433.5 L1181.3,431.1 L1182.4,433.8 L1183.6,430.8 L1184.8,433.5 L1185.4,431.0 L1186.0,433.4 L1186.9,432.7 L1187.8,433.6 L1188.7,431.5 L1189.5,433.6 L1190.7,432.1 L1191.9,433.5 L1192.7,432.0 L1193.5,434.0 L1194.6,431.4 L1195.7,434.0 L1196.3,430.5 L1196.9,433.9 L1197.9,430.5 L1198.8,433.7 L1200.2,431.6 L1201.6,433.6 L1202.2,430.6 L1202.9,433.9 L1203.9,432.6 L1204.9,433.4 L1205.7,430.5 L1206.5,433.6 L1207.1,431.0 L1207.8,433.6 L1208.6,430.5 L1209.5,433.4 L1210.9,430.8 L1212.2,433.7 L1213.2,431.7 L1214.1,433.5 L1214.9,430.7 L1215.8,433.7 L1217.1,431.8 L1218.5,433.9 L1219.2,430.4 L1220.0,433.7 L1221.0,431.8 L1222.0,433.6 L1223.1,432.1 L1224.2,433.9 L1225.0,431.5 L1225.9,433.9 L1226.7,430.7 L1227.4,433.6 L1228.1,432.3 L1228.8,433.9 L1229.6,430.7 L1230.5,433.4 L1231.3,430.6 L1232.1,433.7 L1233.1,431.0 L1234.2,433.4 L1235.3,430.5 L1236.5,433.5 L1237.3,431.3 L1238.2,433.5 L1239.1,431.2 L1240.0,433.9 L1241.1,432.6 L1242.1,433.8 L1243.3,431.8 L1244.5,433.7 L1245.8,432.0 L1247.1,434.0 L1248.2,432.1 L1249.4,433.6 L1250.7,431.3 L1251.9,433.5 L1252.6,430.8 L1253.2,433.6 L1254.4,431.1 L1255.5,433.4 L1256.7,431.7 L1257.9,433.4 L1258.6,430.7 L1259.2,433.6 L1260.5,432.7 L1261.8,433.8 L1262.6,431.4 L1263.4,433.6 L1264.2,430.4 L1265.1,433.8 L1266.3,432.1 L1267.6,433.5 L1268.6,430.8 L1269.7,433.8 L1270.6,432.7 L1271.6,433.9 L1272.3,431.2 L1273.0,433.9 L1273.9,431.4 L1274.9,433.7 L1276.1,432.6 L1277.3,433.7 L1278.7,431.8 L1280.1,433.5 L1278,435 L867.4,435Z" fill="#6fa32b"/>
<path d="M1204.6,431 C1207.4,421 1206,409 1198,400.6 L1202.2,397.6 L1208.4,405 L1209.6,394 L1214.8,394 L1215,405.6 L1220.6,398 L1224.4,400.6 C1217.6,409 1215.6,421 1218,431Z" fill="#b5613c"/>
<g fill="#1f9a4a">
<ellipse cx="1210" cy="385" rx="27" ry="22"/>
<ellipse cx="1194" cy="379" rx="16" ry="15"/>
<ellipse cx="1227" cy="381" rx="16" ry="16"/>
<ellipse cx="1209" cy="368.6" rx="17" ry="9"/>
<ellipse cx="1190" cy="396" rx="13" ry="11"/>
<ellipse cx="1230" cy="399" rx="13" ry="11"/>
<ellipse cx="1210" cy="402" rx="20" ry="9"/>
<ellipse cx="1200" cy="366" rx="9" ry="6"/>
<ellipse cx="1221" cy="367" rx="9" ry="6"/>
</g>
<g fill="#27a552"><ellipse cx="1208" cy="381" rx="19" ry="12"/><ellipse cx="1199" cy="373" rx="9" ry="6"/><ellipse cx="1222" cy="389" rx="10" ry="7"/></g>
<path d="M1204.4,416 L1209.4,399 L1213.4,399 L1216.4,414 Z" fill="#b5613c"/>
<path d="M1201,403.6 L1198,400.6 L1202.2,397.6 L1207,403.4Z M1217,404 L1220.6,398 L1224.4,400.6 L1220.4,406Z" fill="#b5613c"/>
<path d="M882,399.5 L882,410 C876,416 872,424 867.4,431 L867.4,418 C872,412 876,404 882,399.5Z" fill="#2f9bea"/>
<path d="M882,399.5 C876,404 872,412 867.4,418 L867.4,415 C872,408 876,401 882,397Z" fill="#63b8f5"/>
<path d="M886,404 L908,404 L925,427 L925,435 L902,435 L886,412Z" fill="#f9a21b"/>
<path d="M886,404 L893,404 L912,431 L925,431 L925,435 L902,435 L886,412Z" fill="#f7871a"/>
<path d="M895,408 h14 M899,414 h14 M903,420 h14 M907,426 h14" stroke="#fbc02d" stroke-width="1.6"/>
<rect x="888" y="394" width="8.5" height="11" fill="#e8782a"/>
<g fill="#fbc02d">
<rect x="913.3" y="388.5" width="1.5" height="19"/>
<rect x="916.3" y="388.5" width="1.5" height="19"/>
<rect x="919.4" y="388.5" width="1.5" height="19"/>
<rect x="922.4" y="388.5" width="1.5" height="19"/>
<rect x="925.5" y="388.5" width="1.5" height="19"/>
<rect x="928.5" y="388.5" width="1.5" height="19"/>
<rect x="931.6" y="388.5" width="1.5" height="19"/>
<rect x="934.6" y="388.5" width="1.5" height="19"/>
<rect x="937.7" y="388.5" width="1.5" height="19"/>
</g>
<path d="M911,393.5 Q926,383 941,393.5" stroke="#e23a22" stroke-width="2.2" fill="none"/>
<path d="M911,411 Q926,401 941,411" stroke="#e23a22" stroke-width="2.4" fill="none"/>
<rect x="882.3" y="368" width="5.6" height="67.5" fill="#8fce1a"/>
<rect x="905.6" y="368" width="5.6" height="67.5" fill="#8fce1a"/>
<rect x="940.8" y="368" width="5.6" height="67.5" fill="#8fce1a"/>
<rect x="963.6" y="368" width="5.6" height="67.5" fill="#8fce1a"/>
<rect x="881.5" y="367.3" width="29" height="2.2" fill="#29abe2"/>
<path d="M896,350.5 L912.5,367.5 L879.5,367.5Z" fill="#f7941d"/>
<path d="M896,350.5 L887,367.5 L891.5,367.5Z M896,350.5 L900.5,367.5 L905,367.5Z M896,350.5 L879.5,367.5 L882.5,367.5Z M896,350.5 L909.5,367.5 L912.5,367.5Z" fill="#e23a22"/>
<rect x="940.5" y="367.3" width="29" height="2.2" fill="#29abe2"/>
<path d="M955,350.5 L971.5,367.5 L938.5,367.5Z" fill="#f7941d"/>
<path d="M955,350.5 L946,367.5 L950.5,367.5Z M955,350.5 L959.5,367.5 L964,367.5Z M955,350.5 L938.5,367.5 L941.5,367.5Z M955,350.5 L968.5,367.5 L971.5,367.5Z" fill="#e23a22"/>
<rect x="887.9" y="391" width="17.8" height="2.6" fill="#29abe2"/>
<rect x="946.4" y="391" width="17.3" height="2.6" fill="#29abe2"/>
<rect x="946.4" y="393.6" width="17.3" height="14.6" fill="#fbc02d"/>
<rect x="946.4" y="408.2" width="17.3" height="2.8" fill="#29abe2"/>
<path d="M949,411 v3 h11 a2.6,2.6 0 0 1 0,5.2 h-8 a2.6,2.6 0 0 0 0,5.2 h8 a2.6,2.6 0 0 1 0,5.2 h-8 a2.6,2.6 0 0 0 -2.6,2.6 v2.6" stroke="#e23a22" stroke-width="2.5" fill="none"/>
<path d="M969,398 L973,398 C980,412 990,428 1005,431.5 L1004,436 L992,435 C982,428 974,414 969,404Z" fill="#2f9bea"/>
<path d="M969,398 L971,398 C978,414 988,430 1004,433 L1004,436 L992,435 C982,428 974,414 969,404Z" fill="#1e88e5" opacity="0.6"/>
<circle cx="898" cy="384" r="2.9" fill="#2c4a7c"/><rect x="896.7" y="385.7" width="2.6" height="2.0" fill="#c98a66"/>
<rect x="893.5" y="387.5" width="9.5" height="13" rx="1.5" fill="#a5563a"/><path d="M894,390 l-5,-9" stroke="#c98a66" stroke-width="1.4"/>
<rect x="895" y="400" width="3.2" height="14.5" fill="#2c4a7c"/><rect x="899.4" y="400" width="3.2" height="13" fill="#2c4a7c"/>
<circle cx="922.8" cy="376.6" r="1.9" fill="#1d2b53"/><circle cx="929.2" cy="376.6" r="1.9" fill="#1d2b53"/><circle cx="926" cy="379.4" r="2.8" fill="#1d2b53"/><circle cx="926.0" cy="380.5" r="2.2" fill="#8d5a3b"/>
<rect x="923" y="383" width="6" height="8" rx="1" fill="#f26d8d"/><path d="M929,385 l5,-3" stroke="#8d5a3b" stroke-width="1.2"/>
<rect x="923.6" y="391" width="4.8" height="9" fill="#f26d8d" opacity="0.8"/>
<circle cx="955" cy="382.5" r="2.6" fill="#e8b08e"/><path d="M951,381.5 h8 l-1.4,-3 h-5.2z" fill="#ef5f86"/><rect x="950.5" y="385.5" width="9" height="6" rx="1.5" fill="#4a7bc8"/>
<circle cx="977.6" cy="398" r="2.9" fill="#2c4a7c"/><circle cx="976.6" cy="399.1" r="2.3" fill="#b5784f"/><path d="M974.5,402 h6.5 l0.8,7 h-5z" fill="#f2a03d"/>
<path d="M1016,427 h15 l2,8 l4,4 l-4,-1 l1,4 l-4,-4 l-2,5 l-2,-5 l-4,4 l1,-5 l-6,3 l5,-6 l-6,0 l5,-3z" fill="#7a3b1e"/>
<ellipse cx="1023.5" cy="427" rx="7.5" ry="1.6" fill="#a86a45"/>
<g transform="rotate(14 1045 430)"><rect x="1030" y="420.5" width="27" height="5.2" rx="2" fill="#a1512c"/><rect x="1028" y="425.5" width="31" height="5.4" rx="2" fill="#8b4424"/><rect x="1029" y="430.6" width="30" height="5.2" rx="2" fill="#9b4c29"/><circle cx="1057" cy="423" r="2.4" fill="#c98a66"/><circle cx="1059" cy="428.2" r="2.5" fill="#c98a66"/><circle cx="1059" cy="433.2" r="2.4" fill="#c98a66"/></g>
<path d="M1021.3,419 l-1,7.5 h1.6 l1.4,-7.5z" fill="#e8a07a"/><path d="M1019,418 l-7,3.2 l0.7,1.5 l8,-2.6z" fill="#e8a07a"/>
<path d="M1017,413.5 h8 l0.8,5.6 h-9.4z" fill="#2f4a8a"/>
<rect x="1018.6" y="406.3" width="7.2" height="8.4" rx="1.6" fill="#8b8df0"/>
<path d="M1025.5,408.5 l6,-6.5" stroke="#e8a07a" stroke-width="1.3"/><path d="M1019,408 l-1.5,4.5" stroke="#e8a07a" stroke-width="1.3"/>
<path d="M1019,407.5 c-1.4,-3 -1,-6 0.6,-7.6 l3,1.6 l-1,6z" fill="#b5653d"/><circle cx="1022.8" cy="402" r="2.9" fill="#b5653d"/><circle cx="1023.8" cy="403.1" r="2.3" fill="#e8a07a"/>
<rect x="1040" y="415" width="2.7" height="8.5" fill="#f5c53a"/><rect x="1044" y="415" width="2.7" height="8.5" fill="#f5c53a"/>
<rect x="1038" y="405" width="10.5" height="10.5" rx="2" fill="#e23c5a"/>
<path d="M1048,407.5 l4,-3.5" stroke="#e8b08e" stroke-width="1.3"/><path d="M1038.6,408 l-1.2,6" stroke="#e8b08e" stroke-width="1.3"/>
<rect x="1037.2" y="413.4" width="3.6" height="2.6" fill="#39a9e8"/>
<path d="M1045.5,405 l2.6,7" stroke="#2f3f6a" stroke-width="1.2"/>
<circle cx="1043" cy="401" r="2.9" fill="#2c3f7c"/><circle cx="1043.0" cy="402.1" r="2.3" fill="#e8b08e"/>
<circle cx="1074" cy="426.8" r="7" fill="none" stroke="#4a4a4a" stroke-width="1.2"/><circle cx="1074" cy="426.8" r="1" fill="#4a4a4a"/>
<path d="M1074,419.8 v14 M1067,426.8 h14 M1069,421.8 l10,10 M1079,421.8 l-10,10" stroke="#7a8a9a" stroke-width="0.4"/>
<circle cx="1083.8" cy="432.6" r="2" fill="none" stroke="#4a4a4a" stroke-width="1"/>
<path d="M1069,414 h3.4 v8 h11 v9" stroke="#4a4a4a" stroke-width="1" fill="none"/>
<path d="M1073,410.5 h5 l3.4,7 l5,0.6 l0,2 l-10,0.5 z" fill="#a5563a"/>
<path d="M1077.5,418.5 h8.5 l1.6,9.5 h-3 l-1.6,-6.5 h-5.5z" fill="#2f5fb0"/><rect x="1084.4" y="427.6" width="4.4" height="1.6" rx="0.8" fill="#2c3f7c"/>
<circle cx="1075.3" cy="406" r="2.9" fill="#8b4a2b"/><circle cx="1076.3" cy="407.1" r="2.3" fill="#c98a66"/>
<rect x="1092.6" y="420.2" width="4.8" height="4" fill="#d8352a"/><rect x="1098.6" y="420.2" width="8" height="4" fill="#d8352a"/>
<path d="M1097.6,407 c0,-1.4 1,-2 2.4,-2 h4 c2,0 3,1.4 3.2,3 l1,12.6 h-9.6z" fill="#a5563a"/>
<path d="M1098,409.5 l-8,2" stroke="#e8a07a" stroke-width="1.3"/>
<path d="M1088,413.5 h5.4 l-0.5,6 h-4.4z" fill="#d8352a"/><path d="M1088,413.5 q2.7,-3 5.4,0" fill="none" stroke="#b32a20" stroke-width="0.5"/>
<circle cx="1100.6" cy="402.6" r="2.6" fill="#e8a07a"/><circle cx="1104.6" cy="400" r="2.6" fill="#f7841d"/><path d="M1098,403 a3,3 0 0 1 5.6,-2.4 l-1.6,-1.6 l-3,0.6z" fill="#f7841d"/>
<path d="M1121,417 h9 l1,5 h-11z" fill="#2f4a8a"/>
<rect x="1121" y="406.4" width="8.6" height="11" rx="2" fill="#f5b81f"/>
<path d="M1129,409.5 l6.5,2.4" stroke="#c98a66" stroke-width="1.3"/>
<circle cx="1127" cy="402.6" r="2.9" fill="#2c3f7c"/><circle cx="1128.0" cy="403.7" r="2.3" fill="#c98a66"/>
<path d="M1108,424 C1120,424 1128,417.6 1139,417.6 C1147,417.6 1150,421 1156,424Z" fill="#f5d04f"/>
<circle cx="1140.8" cy="417.3" r="1.5" fill="#7fc41c"/><path d="M1139.6,411 v5" stroke="#7fc41c" stroke-width="0.6" stroke-dasharray="1.2 0.8"/>
<rect x="1093" y="423.4" width="64" height="4.2" fill="#f9b21a"/>
<rect x="1104" y="427.6" width="46.5" height="6.6" fill="#19b1f5"/>
<rect x="1093" y="427.6" width="3.4" height="7" fill="#f7871a"/><rect x="1096.4" y="427.6" width="3.2" height="6.5" fill="#19b1f5"/><rect x="1099.6" y="427.6" width="4.4" height="7" fill="#f9b21a"/>
<rect x="1150.5" y="427.6" width="4" height="7" fill="#f9b21a"/><rect x="1152" y="420.4" width="5" height="3.4" fill="#d8352a"/>
<path d="M1166.6,428 v6 M1169.8,428 v6" stroke="#f5f5f5" stroke-width="1.2"/>
<path d="M1165.4,418.4 h5.6 l1.6,10 h-8.8z" fill="#f5c53a"/>
<path d="M1165.6,419.4 l-3.6,-4.6 M1170.8,419.4 l3.6,-4.6" stroke="#e8b08e" stroke-width="1.1"/>
<rect x="1165.2" y="414" width="6" height="4.4" rx="1" fill="#2c3f7c"/><circle cx="1168.2" cy="414.6" r="2.7" fill="#2c3f7c"/><circle cx="1168.2" cy="415.6" r="2.1" fill="#e8b08e"/>
<circle cx="1189.6" cy="427" r="3.8" fill="#e2452c"/><path d="M1186,425 a4,4 0 0 1 7,-0.6z" fill="#f5c53a"/><path d="M1192.6,424 l3.6,-1.6 l-1,4z" fill="#f5c53a"/>
<circle cx="1272" cy="471.8" r="71.3" fill="#ffffff"/>
<path d="M1238.4,449 l-6.2,10 l3.4,1.8 l7.4,-10.4z" fill="#a8683f"/><path d="M1244.4,449.6 l1.6,11.6 h3.8 l-0.8,-12z" fill="#a8683f"/>
<path d="M1231.6,457.4 l4.4,2.4 l1.4,3.4 l-1.6,2.6 l-6.8,-3.8 l0.8,-1.8z" fill="#2f4f8f"/><path d="M1245.4,459.8 h4.4 l0.4,2.6 l3,1.6 v2.4 h-8.4z" fill="#2f4f8f"/>
<path d="M1236.6,442 h13 l0.8,9.6 h-6 l-0.8,-3 l-1.8,3 h-6.6z" fill="#34508f"/>
<path d="M1236.4,426 c0.6,-1.8 2,-2.4 4.2,-2.4 h5.6 c2.2,0 3.8,1 4.4,2.8 l1.8,4.4 l-2.6,1.4 l-0.4,11 h-12.6 l0.6,-10.4 l-2,5 l-2.4,-1 z" fill="#8a9df5"/>
<path d="M1237.4,432 l1,11 h2.6 l-1,-12z" fill="#6f86d8"/>
<path d="M1233.4,436.6 l-1,6 l1.6,0.4 l1.8,-5.6z" fill="#a8683f"/><path d="M1250.4,431.6 l4.4,6 l4.6,2.4 l0.8,-1.4 l-4,-2.6 l-3.4,-5.6z" fill="#a8683f"/>
<rect x="1245" y="420.6" width="3" height="3.6" fill="#a8683f"/>
<circle cx="1247.2" cy="416.4" r="5" fill="#1d2b53"/><circle cx="1249.0" cy="418.3" r="3.9" fill="#a8683f"/>
<rect x="887.60" y="443.0" width="4.7" height="10.6" rx="0.8" fill="#e8508a" stroke="#e4ecd8" stroke-width="0.45"/>
<circle cx="889.95" cy="446.0" r="1" fill="#3a3a4a"/><path d="M888.80,452.6 l1.1,-5 l1.2,5z" fill="#3a3a4a"/>
<rect x="892.85" y="443.5" width="4.7" height="10.1" rx="0.8" fill="#f28a1c" stroke="#e4ecd8" stroke-width="0.45"/>
<circle cx="895.20" cy="446.6" r="1" fill="#3a3a4a"/><path d="M894.05,452.6 l1.1,-5 l1.2,5z" fill="#3a3a4a"/>
<rect x="898.10" y="443.0" width="4.7" height="10.6" rx="0.8" fill="#dcd6cc" stroke="#e4ecd8" stroke-width="0.45"/>
<circle cx="900.45" cy="447.2" r="1" fill="#3a3a4a"/><path d="M899.30,452.6 l1.1,-5 l1.2,5z" fill="#3a3a4a"/>
<rect x="903.35" y="443.5" width="4.7" height="10.1" rx="0.8" fill="#3f8f7a" stroke="#e4ecd8" stroke-width="0.45"/>
<circle cx="905.70" cy="446.0" r="1" fill="#3a3a4a"/><path d="M904.55,452.6 l1.1,-5 l1.2,5z" fill="#3a3a4a"/>
<rect x="908.60" y="443.0" width="4.7" height="10.6" rx="0.8" fill="#3f9be8" stroke="#e4ecd8" stroke-width="0.45"/>
<circle cx="910.95" cy="446.6" r="1" fill="#3a3a4a"/><path d="M909.80,452.6 l1.1,-5 l1.2,5z" fill="#3a3a4a"/>
<rect x="913.85" y="443.5" width="4.7" height="10.1" rx="0.8" fill="#9a78d8" stroke="#e4ecd8" stroke-width="0.45"/>
<circle cx="916.20" cy="447.2" r="1" fill="#3a3a4a"/><path d="M915.05,452.6 l1.1,-5 l1.2,5z" fill="#3a3a4a"/>
<text x="888.6" y="458.1" font-family="Liberation Sans, sans-serif" font-weight="700" font-size="3.5" fill="#e2ebd4" textLength="29" lengthAdjust="spacingAndGlyphs">RECREATION</text>
<text x="893" y="460.9" font-family="Liberation Sans, sans-serif" font-size="1.9" fill="#d4e0c0" textLength="20" lengthAdjust="spacingAndGlyphs">NOVA SCOTIA</text>
</g>
<path d="M956.5,102 L934,108 L948.5,117Z" fill="#3fa9e8"/><path d="M956.5,102 L963,124 L948.5,117Z" fill="#f4d04f"/><path d="M934,108 L948.5,117 L931,148.5Z" fill="#f7a026"/><path d="M963,124 L948.5,117 L931,148.5Z" fill="#8fce1a"/>
<path d="M931,148.5 c-0.6,2.4 -1.4,3.6 -2,4.6 c-1.6,3 -5,6 -8.4,4.6 c-2.4,-1 -4.4,-1.6 -6.4,-0.6 c-3.4,1.8 -5.4,3.4 -8.4,5.4 c-2.4,1.6 -3.6,3.6 -4.6,5.6 c-0.8,1.8 -1.6,3.4 -3.2,5" stroke="#3fa9e8" stroke-width="2.2" fill="none" stroke-linecap="round"/>
<path d="M929.4,152.8 l-5.4,-3.4 l1,4.8z M929.4,152.8 l5.6,1.2 l-3.4,4.4z M929.4,152.8 l-3,5.4 l-1,-3z" fill="#3fa9e8"/>
<path d="M915.4,156.6 l-5,-5.4 l1.6,8.4z M915.4,156.6 l4,3 l-5,4.2 l0.4,-3.6z" fill="#f7941d"/>
<path d="M901,168.4 l-6.4,-3.4 l3,6.6z M901,168.4 l6,0.4 l-3.4,5.2z" fill="#8fce1a"/>
<path d="M1006.6,134 L1011.8,133 L1015.8,139.4 L1003,145Z" fill="#f4d04f"/><path d="M1006.6,134 L1009.4,133.5 L1003,145Z" fill="#f4d04f"/><path d="M1009.4,133.5 L1011.8,133 L1003,145Z" fill="#7fc41c"/><path d="M1011.8,133 L1014,136.4 L1003,145Z" fill="#3fa9e8"/><path d="M1014,136.4 L1015.8,139.4 L1003,145Z" fill="#f7a026"/>
<g fill="none" stroke-width="1.4" stroke-linecap="round"><path d="M1003,145 c-4,3 -9,1.6 -13.4,4.4 c-3.6,2.4 -5.6,5.6 -8,9" stroke="#3fa9e8"/><path d="M1003,145 c-4,3.6 -8.6,3 -12,6.4 c-3,3 -4.6,6 -6.6,9.6" stroke="#f0f4f8"/><path d="M1003,145 c-3.6,4 -8,4.4 -11,8 c-2.6,3.2 -4.4,6 -7,9.4" stroke="#e23c3c"/><path d="M1003,145 c-3,4.6 -7,6 -9.6,10 c-2.4,3.6 -3.4,7 -5.4,10.6" stroke="#f7941d"/></g>
<path d="M1186,131 L1202,133 L1211,159 L1186,145Z" fill="#f4c84f"/><path d="M1186,131 L1194,132 L1211,159Z" fill="#7fc41c"/><path d="M1186,131 L1189.5,131.5 L1211,159 L1186,138Z" fill="#3fa9e8"/><path d="M1186,138 L1211,159 L1186,145Z" fill="#f7a026"/>
<g fill="none" stroke-width="2.3"><path d="M1212,159.6 c6,3 12,2 18,4 c8,3 9,10 12,15 c2,3 4,5 7,7" stroke="#2f8fe0"/><path d="M1211.6,160 c6,3.6 11,3 16.6,6 c7.4,4 8.4,11.4 11.4,16.6 c2,3 4,5.6 7,7.6" stroke="#f0f5fa"/><path d="M1211.4,160.4 c5,4 10,4 15,8 c7,5 7.6,12.6 10.6,17.6 c2,3 4,5.4 7,7.4" stroke="#d8322c"/><path d="M1211,160.6 c4,5 8,6 12,11 c6,7 5.6,14 7.6,20 c1,3 3,5.6 6,8" stroke="#f7a026"/></g>
<text x="935.3" y="220.6" font-family="Liberation Sans, sans-serif" font-size="58" fill="#2e9a3c" textLength="58.7" lengthAdjust="spacingAndGlyphs"><tspan font-size="68">W</tspan>HY</text>
<text x="1007" y="220.6" font-family="Liberation Sans, sans-serif" font-size="58" fill="#6aaae4" textLength="126.8" lengthAdjust="spacingAndGlyphs"><tspan font-size="68">O</tspan>UTDOOR</text>
<text x="1149" y="220.6" font-family="Liberation Sans, sans-serif" font-size="58" fill="#6aaae4" textLength="59.9" lengthAdjust="spacingAndGlyphs"><tspan font-size="66">P</tspan>LAY</text>
<text x="939.7" y="269.2" font-family="Liberation Sans, sans-serif" font-size="49" fill="#f5914a" textLength="94.9" lengthAdjust="spacingAndGlyphs"><tspan font-size="55">M</tspan>ATTERS</text>
<text x="1044.7" y="269.2" font-family="Liberation Sans, sans-serif" font-size="49" fill="#7b83eb" textLength="34.3" lengthAdjust="spacingAndGlyphs">FOR</text>
<text x="1089" y="269.2" font-family="Liberation Sans, sans-serif" font-size="49" fill="#7b83eb" textLength="115.5" lengthAdjust="spacingAndGlyphs"><tspan font-size="55">C</tspan>HILDREN</text>
<text x="938.7" y="302.8" font-family="Liberation Sans, sans-serif" font-size="23" fill="#1f3a5f" textLength="5.9" lengthAdjust="spacingAndGlyphs"><tspan font-size="25.6">A</tspan></text>
<text x="948" y="302.8" font-family="Liberation Sans, sans-serif" font-size="23" fill="#1f3a5f" textLength="55.6" lengthAdjust="spacingAndGlyphs"><tspan font-size="25.6">P</tspan>RACTICAL</text>
<text x="1009.6" y="302.8" font-family="Liberation Sans, sans-serif" font-size="23" fill="#1f3a5f" textLength="32.0" lengthAdjust="spacingAndGlyphs"><tspan font-size="25.6">G</tspan>UIDE</text>
<text x="1046.6" y="302.8" font-family="Liberation Sans, sans-serif" font-size="23" fill="#1f3a5f" textLength="16.4" lengthAdjust="spacingAndGlyphs">FOR</text>
<text x="1068" y="302.8" font-family="Liberation Sans, sans-serif" font-size="23" fill="#1f3a5f" textLength="44.6" lengthAdjust="spacingAndGlyphs"><tspan font-size="25.6">P</tspan>ARENTS</text>
<text x="1118.6" y="302.8" font-family="Liberation Sans, sans-serif" font-size="23" fill="#1f3a5f" textLength="19.4" lengthAdjust="spacingAndGlyphs">AND</text>
<text x="1144" y="302.8" font-family="Liberation Sans, sans-serif" font-size="23" fill="#1f3a5f" textLength="62.9" lengthAdjust="spacingAndGlyphs"><tspan font-size="25.6">C</tspan>AREGIVERS</text>
<g stroke="#333" stroke-width="0.6"><path d="M873.5,59 v11 M859,74.3 h11 M1271.7,59 v11 M1275,74.3 h11 M873.5,476.4 v9.6 M1271.7,476.4 v9.6"/><path d="M859,471.7 h10.4 M1275.6,471.7 h10.4" stroke="#8a8a8a"/></g>
</svg>
<!-- icons -->
<svg width="1536" height="505" viewBox="0 0 1536 505" fill="none">
<circle cx="249.6" cy="153" r="2" stroke="#1f3864" stroke-width="0.6"/><path d="M248.2,154.6 l-2,2.2" stroke="#1f3864" stroke-width="0.6"/>
<path d="M539,156 l1,-3 l4.6,-4.4 l1.8,1.8 l-4.6,4.6z" stroke="#fff" stroke-width="0.6"/>
<rect x="560" y="150.6" width="6" height="5" stroke="#fff" stroke-width="0.6"/><path d="M560,152.4 h6" stroke="#fff" stroke-width="0.6"/>
<path d="M582,153.6 h4.4" stroke="#fff" stroke-width="0.6"/>
<rect x="603.6" y="151.6" width="4" height="4" stroke="#fff" stroke-width="0.6"/><path d="M604.8,151.6 v-1.2 h4 v4 h-1.2" stroke="#fff" stroke-width="0.5"/>
<path d="M625,151.2 l4.4,4.4 M629.4,151.2 l-4.4,4.4" stroke="#fff" stroke-width="0.6"/>
<clipPath id="tb"><rect x="0" y="145" width="638.5" height="16"/></clipPath><g clip-path="url(#tb)" stroke="#254d8f" stroke-width="0.9" opacity="0.75"><path d="M409,151.6 h72 M412,161 a8,8 0 0 1 16,0 M430,161 l6,-4 h60 M604,161 l12,-8 h22 M620,161 l18,-13 M626,161 l12,-9"/><circle cx="541.5" cy="153" r="9.4"/><path d="M522,156 l8,5 M553,146 l10,15"/></g>
<path d="M548.4,166 h5.2 v3.6 h-3 l-1.2,1.4 v-1.4 h-1z" stroke="#2b579a" stroke-width="0.6"/>
<path d="M599,170.6 h4.4 v-2 M600.4,169 c0.4,-2 1.6,-2.6 3.4,-2.6 M602.8,165.2 l1.4,1.2 l-1.4,1.2" stroke="#2b579a" stroke-width="0.6"/>
<path d="M627.3,168.0 L628.4,169.3 L629.5,168.0Z" fill="#2b579a"/>
<rect x="8.4" y="181.4" width="9.4" height="11.4" rx="0.8" stroke="#f0a045" stroke-width="0.7" fill="#fbfbfb"/>
<rect x="10.6" y="179.6" width="5" height="2.6" rx="0.8" fill="#e8e8e8" stroke="#888" stroke-width="0.5"/>
<rect x="14.4" y="185" width="7.4" height="8.4" fill="#fff" stroke="#8a8a8a" stroke-width="0.6"/>
<path d="M12.2,204.5 L13.5,206.0 L14.8,204.5Z" fill="#666"/>
<path d="M27,180.6 l3.6,5.4 M30.6,180.6 l-3.6,5.4" stroke="#8a8a8a" stroke-width="0.6"/><circle cx="26.8" cy="186.8" r="0.9" stroke="#8a8a8a" stroke-width="0.5"/><circle cx="30.8" cy="186.8" r="0.9" stroke="#8a8a8a" stroke-width="0.5"/>
<path d="M26.4,190.4 h3.2 v5.4 h-3.2z M28.4,192 h3.6 v5.8 h-3.6z" stroke="#8a8a8a" stroke-width="0.55" fill="#f6f6f6"/>
<path d="M26,205 l3.4,-3.4 l2,2 l-3.4,3.4z" fill="#f0913a"/><path d="M29.8,201.2 l1.6,-1.6 l1.4,1.4 l-1.6,1.6z" fill="#666"/><path d="M25.4,207.6 l2.4,0 l-1.6,-1.6z" fill="#f0913a"/>
<path d="M32.6,215.2 h2.6 v2.6 M33.4,217.6 l1.6,-1.6" stroke="#666" stroke-width="0.5"/>
<path d="M87.7,185.8 L89.0,187.1 L90.3,185.8" fill="none" stroke="#666" stroke-width="0.6"/>
<path d="M109.1,185.8 L110.4,187.1 L111.7,185.8" fill="none" stroke="#666" stroke-width="0.6"/>
<path d="M124,183 l1,-1 l1,1" stroke="#2b7cd3" stroke-width="0.5"/><path d="M133.6,183 l1,1 l1,-1" stroke="#2b7cd3" stroke-width="0.5"/>
<path d="M151.6,186.1 L152.6,187.3 L153.6,186.1Z" fill="#666"/>
<path d="M168.4,188.4 l2.2,-2.2 l1.4,1.4 l-2.2,2.2z" fill="#c24fb0"/>
<path d="M75.3,201.5 L76.6,203.0 L77.9,201.5Z" fill="#666"/>
<path d="M130.1,201.5 L131.4,203.0 L132.7,201.5Z" fill="#666"/>
<path d="M149.1,201.5 L150.4,203.0 L151.7,201.5Z" fill="#666"/>
<path d="M167.1,201.5 L168.4,203.0 L169.7,201.5Z" fill="#666"/>
<path d="M139.4,204 l1,-2.6 l3.6,-3.6 l1.6,1.6 l-3.6,3.6z" stroke="#555" stroke-width="0.6" fill="#fff"/><path d="M139.4,204 l1,-2.6 l1.6,1.6z" fill="#555"/>
<path d="M172,215.2 h2.6 v2.6 M172.8,217.6 l1.6,-1.6" stroke="#666" stroke-width="0.5"/>
<rect x="180.5" y="179.6" width="0.9" height="0.9" fill="#2b7cd3"/>
<path d="M182.5,180.0 H188.5" stroke="#555" stroke-width="0.6"/>
<rect x="180.5" y="181.8" width="0.9" height="0.9" fill="#2b7cd3"/>
<path d="M182.5,182.2 H188.5" stroke="#555" stroke-width="0.6"/>
<rect x="180.5" y="184.0" width="0.9" height="0.9" fill="#2b7cd3"/>
<path d="M182.5,184.4 H188.5" stroke="#555" stroke-width="0.6"/>
<rect x="199.0" y="179.6" width="0.9" height="0.9" fill="#2b7cd3"/>
<path d="M201.0,180.0 H207.0" stroke="#555" stroke-width="0.6"/>
<rect x="199.0" y="181.8" width="0.9" height="0.9" fill="#2b7cd3"/>
<path d="M201.0,182.2 H207.0" stroke="#555" stroke-width="0.6"/>
<rect x="199.0" y="184.0" width="0.9" height="0.9" fill="#2b7cd3"/>
<path d="M201.0,184.4 H207.0" stroke="#555" stroke-width="0.6"/>
<rect x="217.0" y="179.6" width="0.9" height="0.9" fill="#2b7cd3"/>
<path d="M219.0,180.0 H225.0" stroke="#555" stroke-width="0.6"/>
<rect x="217.8" y="181.8" width="0.9" height="0.9" fill="#2b7cd3"/>
<path d="M219.8,182.2 H225.0" stroke="#555" stroke-width="0.6"/>
<rect x="218.6" y="184.0" width="0.9" height="0.9" fill="#2b7cd3"/>
<path d="M220.6,184.4 H225.0" stroke="#555" stroke-width="0.6"/>
<path d="M191.7,181.8 L193.0,183.2 L194.3,181.8Z" fill="#666"/>
<path d="M209.7,181.8 L211.0,183.2 L212.3,181.8Z" fill="#666"/>
<path d="M227.3,181.8 L228.6,183.2 L229.9,181.8Z" fill="#666"/>
<path d="M238.7,179.6 h7.0" stroke="#555" stroke-width="0.6"/>
<path d="M241.7,181.6 h4.0" stroke="#555" stroke-width="0.6"/><path d="M241.7,183.4 h4.0" stroke="#555" stroke-width="0.6"/>
<path d="M238.7,185.4 h7.0" stroke="#555" stroke-width="0.6"/>
<path d="M240.7,181.4 l-1.4,1.1 l1.4,1.1z" fill="#2b7cd3"/>
<path d="M250.0,179.6 h7.0" stroke="#555" stroke-width="0.6"/>
<path d="M253.0,181.6 h4.0" stroke="#555" stroke-width="0.6"/><path d="M253.0,183.4 h4.0" stroke="#555" stroke-width="0.6"/>
<path d="M250.0,185.4 h7.0" stroke="#555" stroke-width="0.6"/>
<path d="M250.4,181.4 l1.4,1.1 l-1.4,1.1z" fill="#2b7cd3"/>
<rect x="179" y="188" width="11" height="11.4" fill="#c8c8c8"/>
<path d="M181.0,190.4 h7.0" stroke="#444" stroke-width="0.7"/><path d="M181.0,192.5 h4.6" stroke="#444" stroke-width="0.7"/><path d="M181.0,194.6 h7.0" stroke="#444" stroke-width="0.7"/><path d="M181.0,196.7 h4.6" stroke="#444" stroke-width="0.7"/>
<path d="M193.4,190.4 h6.6" stroke="#555" stroke-width="0.6"/><path d="M193.4,192.5 h6.6" stroke="#555" stroke-width="0.6"/><path d="M193.4,194.6 h6.6" stroke="#555" stroke-width="0.6"/><path d="M193.4,196.7 h6.6" stroke="#555" stroke-width="0.6"/>
<path d="M204.0,190.4 h6.6" stroke="#555" stroke-width="0.6"/><path d="M204.0,192.5 h6.6" stroke="#555" stroke-width="0.6"/><path d="M204.0,194.6 h6.6" stroke="#555" stroke-width="0.6"/><path d="M204.0,196.7 h6.6" stroke="#555" stroke-width="0.6"/>
<path d="M215.0,190.4 h7.0" stroke="#555" stroke-width="0.6"/><path d="M215.0,192.5 h7.0" stroke="#555" stroke-width="0.6"/><path d="M215.0,194.6 h7.0" stroke="#555" stroke-width="0.6"/><path d="M215.0,196.7 h7.0" stroke="#555" stroke-width="0.6"/>
<rect x="194.4" y="192.2" width="4.6" height="0.9" fill="#f3f3f3"/><rect x="194.4" y="196.4" width="4.6" height="0.9" fill="#f3f3f3"/>
<rect x="204" y="192.1" width="2.2" height="0.9" fill="#f3f3f3"/><rect x="204" y="196.3" width="2.2" height="0.9" fill="#f3f3f3"/>
<path d="M230.4,189.4 v7.6 M229.2,190.8 l1.2,-1.4 l1.2,1.4 M229.2,195.6 l1.2,1.4 l1.2,-1.4" stroke="#2b7cd3" stroke-width="0.6"/>
<path d="M232.6,190.6 h4.6" stroke="#555" stroke-width="0.6"/><path d="M232.6,193.2 h4.6" stroke="#555" stroke-width="0.6"/><path d="M232.6,195.8 h4.6" stroke="#555" stroke-width="0.6"/>
<path d="M239.1,192.8 L240.4,194.2 L241.7,192.8Z" fill="#666"/>
<path d="M182,207 l3,-5 l3,3.6 l-2,2z" stroke="#555" stroke-width="0.6"/><path d="M186,201.6 l2.4,3" stroke="#2b7cd3" stroke-width="0.6"/><rect x="181" y="207.6" width="8" height="1.2" fill="#bbb"/>
<path d="M191.7,204.3 L193.0,205.8 L194.3,204.3Z" fill="#666"/>
<rect x="199.4" y="201" width="7.4" height="7" stroke="#999" stroke-width="0.5" stroke-dasharray="0.8 0.6"/><path d="M199,208 h8.2 M203.1,201 v7" stroke="#444" stroke-width="0.7"/>
<path d="M209.7,204.3 L211.0,205.8 L212.3,204.3Z" fill="#666"/>
<path d="M217,199.6 v10" stroke="#d0d0d0" stroke-width="0.6"/>
<path d="M226.6,200.6 v7.6 M225.2,206.8 l1.4,1.6 l1.4,-1.6" stroke="#555" stroke-width="0.6"/>
<path d="M258,215.2 h2.6 v2.6 M258.8,217.6 l1.6,-1.6" stroke="#666" stroke-width="0.5"/>
<path d="M371,183 l1,-1 l1,1" stroke="#aaa" stroke-width="0.5"/>
<path d="M371.0,191.5 L372.0,192.7 L373.0,191.5Z" fill="#666"/>
<path d="M371.0,200.9 L372.0,202.1 L373.0,200.9Z" fill="#666"/>
<path d="M370.8,199.4 h2.4" stroke="#666" stroke-width="0.5"/>
<path d="M376,215.2 h2.6 v2.6 M376.8,217.6 l1.6,-1.6" stroke="#666" stroke-width="0.5"/>
<circle cx="394.6" cy="183" r="2.6" stroke="#555" stroke-width="0.7"/><path d="M392.8,185 l-3,3.2" stroke="#555" stroke-width="0.8"/>
<path d="M392.2,204.5 L393.5,206.0 L394.8,204.5Z" fill="#666"/>
<path d="M427.6,189.6 v-9 h5 l2.4,2.4 v2" stroke="#1e88e5" stroke-width="1"/><path d="M432.4,180.6 v2.6 h2.6" stroke="#1e88e5" stroke-width="0.8"/>
<path d="M431,187 v5 h7.6 v-5" stroke="#1e88e5" stroke-width="1"/><path d="M434.8,190 v-5 M433.2,186.4 l1.6,-1.6 l1.6,1.6" stroke="#1e88e5" stroke-width="0.9"/>
<circle cx="467" cy="182.6" r="2.8" stroke="#1e88e5" stroke-width="0.9"/><path d="M461.4,190.6 c0.4,-3 2.4,-4.4 5.6,-4.4 c1.4,0 2.4,0.4 3.2,1" stroke="#1e88e5" stroke-width="0.9"/>
<path d="M468,192 h8.4" stroke="#1e88e5" stroke-width="0.8"/><path d="M469,189.6 c1,-1.4 1.6,-1 1.6,0 c0.6,-1 1.4,-1 1.6,0 c1,-0.8 2,-0.8 3.4,-0.2" stroke="#1e88e5" stroke-width="0.6"/>
<rect x="496.6" y="178.4" width="5.8" height="10.4" rx="2.9" fill="#6ab0e8"/><path d="M495,186 c0,6 9,6 9,0 M499.5,190.6 v2.6" stroke="#555" stroke-width="0.6"/>
<path d="M498.2,204.5 L499.5,206.0 L500.8,204.5Z" fill="#666"/>
<path d="M526,180 h6 l3,3 v10 h-9z" stroke="#c4c4c4" stroke-width="0.7" fill="#efefef"/><path d="M528,184 l4,5 M529.4,183 l4,5" stroke="#c8c8c8" stroke-width="0.6"/><path d="M533,179 l3,-1.4 l2.4,2.6 l-2,2.4z" stroke="#c4c4c4" stroke-width="0.6" fill="#f3f3f3"/>
<path d="M529.2,204.5 L530.5,206.0 L531.8,204.5Z" fill="#bbb"/>
<path d="M555.4,192 l1.4,-4.4 l6.6,-9 l2.6,1.6 l-6.4,9.4z" stroke="#2b579a" stroke-width="0.8" fill="#fff"/><path d="M555.4,192 l1.4,-4.4 l2.4,2z" fill="#2b579a"/>
<path d="M563,181.6 h6 M561.6,184.4 h6.4 M560,187.2 h6 M558.6,190 h5" stroke="#2b579a" stroke-width="1.1"/>
<rect x="583.6" y="180.6" width="11" height="8.4" stroke="#555" stroke-width="0.8" fill="#f8f8f8"/><path d="M583.6,182.4 h11" stroke="#555" stroke-width="0.7"/>
<circle cx="592.4" cy="188" r="2.6" stroke="#2b7cd3" stroke-width="0.8" fill="#eaf3fc"/><path d="M594.4,190 l2.6,2.8" stroke="#2b7cd3" stroke-width="0.9"/>
<path d="M630.4,217.6 l1.6,-1.6 l1.6,1.6" stroke="#555" stroke-width="0.6"/>
<path d="M3.2,225 h6.4 l1.6,1.6 v6.6 h-8z" fill="#a04a9c"/><rect x="4.8" y="225" width="4.2" height="2.8" fill="#e8d4e8"/><rect x="4.6" y="229.6" width="5" height="3.6" fill="#f0f0f0"/>
<path d="M18,226 v3 h3 M18.2,228.8 c2,-3.4 6.6,-2 5.6,1.6 c-0.4,1.4 -1.6,2.4 -3,2.8" stroke="#555" stroke-width="0.7"/>
<path d="M26.6,228.9 L27.6,230.1 L28.6,228.9Z" fill="#666"/>
<path d="M41.6,226.4 v2.6 h-2.6 M41.4,228.8 c-1.4,-3 -6,-2.4 -6,1.4 c0,3.6 5,4 6,1" stroke="#555" stroke-width="0.7"/>
<path d="M51,228.2 h2.4" stroke="#777" stroke-width="0.5"/>
<path d="M51.3,229.6 L52.2,230.6 L53.1,229.6Z" fill="#777"/>
<path d="M3.8,240.6 v3.2 h3" stroke="#444" stroke-width="0.7"/>
<path d="M142.8,241.2 v0.7" stroke="#888" stroke-width="0.4"/>
<path d="M147.2,240.7 v1.6" stroke="#888" stroke-width="0.4"/>
<path d="M151.7,241.2 v0.7" stroke="#888" stroke-width="0.4"/>
<path d="M160.6,241.2 v0.7" stroke="#888" stroke-width="0.4"/>
<path d="M165.1,240.7 v1.6" stroke="#888" stroke-width="0.4"/>
<path d="M169.5,241.2 v0.7" stroke="#888" stroke-width="0.4"/>
<path d="M178.5,241.2 v0.7" stroke="#888" stroke-width="0.4"/>
<path d="M182.9,240.7 v1.6" stroke="#888" stroke-width="0.4"/>
<path d="M187.4,241.2 v0.7" stroke="#888" stroke-width="0.4"/>
<path d="M196.3,241.2 v0.7" stroke="#888" stroke-width="0.4"/>
<path d="M200.8,240.7 v1.6" stroke="#888" stroke-width="0.4"/>
<path d="M205.2,241.2 v0.7" stroke="#888" stroke-width="0.4"/>
<path d="M214.2,241.2 v0.7" stroke="#888" stroke-width="0.4"/>
<path d="M218.6,240.7 v1.6" stroke="#888" stroke-width="0.4"/>
<path d="M223.1,241.2 v0.7" stroke="#888" stroke-width="0.4"/>
<path d="M232.0,241.2 v0.7" stroke="#888" stroke-width="0.4"/>
<path d="M236.5,240.7 v1.6" stroke="#888" stroke-width="0.4"/>
<path d="M240.9,241.2 v0.7" stroke="#888" stroke-width="0.4"/>
<path d="M249.9,241.2 v0.7" stroke="#888" stroke-width="0.4"/>
<path d="M254.3,240.7 v1.6" stroke="#888" stroke-width="0.4"/>
<path d="M258.8,241.2 v0.7" stroke="#888" stroke-width="0.4"/>
<path d="M267.7,241.2 v0.7" stroke="#888" stroke-width="0.4"/>
<path d="M272.2,240.7 v1.6" stroke="#888" stroke-width="0.4"/>
<path d="M276.6,241.2 v0.7" stroke="#888" stroke-width="0.4"/>
<path d="M285.6,241.2 v0.7" stroke="#888" stroke-width="0.4"/>
<path d="M290.0,240.7 v1.6" stroke="#888" stroke-width="0.4"/>
<path d="M294.5,241.2 v0.7" stroke="#888" stroke-width="0.4"/>
<path d="M303.4,241.2 v0.7" stroke="#888" stroke-width="0.4"/>
<path d="M307.9,240.7 v1.6" stroke="#888" stroke-width="0.4"/>
<path d="M312.3,241.2 v0.7" stroke="#888" stroke-width="0.4"/>
<path d="M321.3,241.2 v0.7" stroke="#888" stroke-width="0.4"/>
<path d="M325.7,240.7 v1.6" stroke="#888" stroke-width="0.4"/>
<path d="M330.2,241.2 v0.7" stroke="#888" stroke-width="0.4"/>
<path d="M339.1,241.2 v0.7" stroke="#888" stroke-width="0.4"/>
<path d="M343.6,240.7 v1.6" stroke="#888" stroke-width="0.4"/>
<path d="M348.0,241.2 v0.7" stroke="#888" stroke-width="0.4"/>
<path d="M357.0,241.2 v0.7" stroke="#888" stroke-width="0.4"/>
<path d="M361.4,240.7 v1.6" stroke="#888" stroke-width="0.4"/>
<path d="M365.9,241.2 v0.7" stroke="#888" stroke-width="0.4"/>
<path d="M374.8,241.2 v0.7" stroke="#888" stroke-width="0.4"/>
<path d="M379.3,240.7 v1.6" stroke="#888" stroke-width="0.4"/>
<path d="M383.7,241.2 v0.7" stroke="#888" stroke-width="0.4"/>
<path d="M392.7,241.2 v0.7" stroke="#888" stroke-width="0.4"/>
<path d="M397.1,240.7 v1.6" stroke="#888" stroke-width="0.4"/>
<path d="M401.6,241.2 v0.7" stroke="#888" stroke-width="0.4"/>
<path d="M410.5,241.2 v0.7" stroke="#888" stroke-width="0.4"/>
<path d="M415.0,240.7 v1.6" stroke="#888" stroke-width="0.4"/>
<path d="M419.4,241.2 v0.7" stroke="#888" stroke-width="0.4"/>
<path d="M428.4,241.2 v0.7" stroke="#888" stroke-width="0.4"/>
<path d="M432.8,240.7 v1.6" stroke="#888" stroke-width="0.4"/>
<path d="M437.3,241.2 v0.7" stroke="#888" stroke-width="0.4"/>
<path d="M446.2,241.2 v0.7" stroke="#888" stroke-width="0.4"/>
<path d="M450.7,240.7 v1.6" stroke="#888" stroke-width="0.4"/>
<path d="M455.1,241.2 v0.7" stroke="#888" stroke-width="0.4"/>
<path d="M464.1,241.2 v0.7" stroke="#888" stroke-width="0.4"/>
<path d="M468.5,240.7 v1.6" stroke="#888" stroke-width="0.4"/>
<path d="M473.0,241.2 v0.7" stroke="#888" stroke-width="0.4"/>
<path d="M481.9,241.2 v0.7" stroke="#888" stroke-width="0.4"/>
<path d="M486.4,240.7 v1.6" stroke="#888" stroke-width="0.4"/>
<path d="M490.8,241.2 v0.7" stroke="#888" stroke-width="0.4"/>
<path d="M499.8,241.2 v0.7" stroke="#888" stroke-width="0.4"/>
<path d="M504.2,240.7 v1.6" stroke="#888" stroke-width="0.4"/>
<path d="M508.7,241.2 v0.7" stroke="#888" stroke-width="0.4"/>
<path d="M4.3,257.2 h1.6" stroke="#888" stroke-width="0.4"/>
<path d="M4.8,261.6 h0.7" stroke="#888" stroke-width="0.4"/>
<path d="M4.8,270.6 h0.7" stroke="#888" stroke-width="0.4"/>
<path d="M4.3,275.0 h1.6" stroke="#888" stroke-width="0.4"/>
<path d="M4.8,279.5 h0.7" stroke="#888" stroke-width="0.4"/>
<path d="M4.8,288.4 h0.7" stroke="#888" stroke-width="0.4"/>
<path d="M4.3,292.9 h1.6" stroke="#888" stroke-width="0.4"/>
<path d="M4.8,297.3 h0.7" stroke="#888" stroke-width="0.4"/>
<path d="M4.8,306.3 h0.7" stroke="#888" stroke-width="0.4"/>
<path d="M4.3,310.7 h1.6" stroke="#888" stroke-width="0.4"/>
<path d="M4.8,315.2 h0.7" stroke="#888" stroke-width="0.4"/>
<path d="M4.8,324.1 h0.7" stroke="#888" stroke-width="0.4"/>
<path d="M4.3,328.6 h1.6" stroke="#888" stroke-width="0.4"/>
<path d="M4.8,333.0 h0.7" stroke="#888" stroke-width="0.4"/>
<path d="M4.8,342.0 h0.7" stroke="#888" stroke-width="0.4"/>
<path d="M4.3,346.4 h1.6" stroke="#888" stroke-width="0.4"/>
<path d="M4.8,350.9 h0.7" stroke="#888" stroke-width="0.4"/>
<path d="M4.8,359.8 h0.7" stroke="#888" stroke-width="0.4"/>
<path d="M4.3,364.3 h1.6" stroke="#888" stroke-width="0.4"/>
<path d="M4.8,368.7 h0.7" stroke="#888" stroke-width="0.4"/>
<path d="M4.8,377.7 h0.7" stroke="#888" stroke-width="0.4"/>
<path d="M4.3,382.1 h1.6" stroke="#888" stroke-width="0.4"/>
<path d="M4.8,386.6 h0.7" stroke="#888" stroke-width="0.4"/>
<path d="M4.8,395.5 h0.7" stroke="#888" stroke-width="0.4"/>
<path d="M4.3,400.0 h1.6" stroke="#888" stroke-width="0.4"/>
<path d="M4.8,404.4 h0.7" stroke="#888" stroke-width="0.4"/>
<path d="M4.8,413.4 h0.7" stroke="#888" stroke-width="0.4"/>
<path d="M4.3,417.8 h1.6" stroke="#888" stroke-width="0.4"/>
<path d="M4.8,422.3 h0.7" stroke="#888" stroke-width="0.4"/>
<path d="M4.8,431.2 h0.7" stroke="#888" stroke-width="0.4"/>
<path d="M4.3,435.7 h1.6" stroke="#888" stroke-width="0.4"/>
<path d="M4.8,440.1 h0.7" stroke="#888" stroke-width="0.4"/>
<path d="M4.8,449.1 h0.7" stroke="#888" stroke-width="0.4"/>
<path d="M4.3,453.5 h1.6" stroke="#888" stroke-width="0.4"/>
<path d="M4.8,458.0 h0.7" stroke="#888" stroke-width="0.4"/>
<path d="M4.8,466.9 h0.7" stroke="#888" stroke-width="0.4"/>
<path d="M4.3,471.4 h1.6" stroke="#888" stroke-width="0.4"/>
<path d="M171.6,238.2 h3.4 v0.8 l-1.7,1.8 l-1.7,-1.8z M173.3,242.2 l1.7,1.7 v1 h-3.4 v-1z M171.6,245.4 h3.4 v2.8 h-3.4z" fill="#fafafa" stroke="#9a9a9a" stroke-width="0.4"/>
<path d="M465.5,242.4 l1.7,1.7 v1.2 h-3.4 v-1.2z" fill="#fafafa" stroke="#9a9a9a" stroke-width="0.4"/>
<path d="M70,478 c1.4,-0.6 2.4,-0.6 3.4,0.2 c1,-0.8 2,-0.8 3.4,-0.2 v5 c-1.4,-0.6 -2.4,-0.6 -3.4,0.2 c-1,-0.8 -2,-0.8 -3.4,-0.2z M73.4,478.2 v5" stroke="#555" stroke-width="0.5"/>
<circle cx="193.4" cy="477.8" r="0.8" stroke="#555" stroke-width="0.5"/><path d="M191,479.6 h4.8 M193.4,479.6 v2 M193.4,481.6 l-1.4,2.4 M193.4,481.6 l1.4,2.4 M195.6,482 l1,1 l1.6,-1.8" stroke="#555" stroke-width="0.5"/>
<path d="M470.6,479 v-1.4 h1.4 M474.6,477.6 h1.4 v1.4 M476,482.4 v1.4 h-1.4 M472,483.8 h-1.4 v-1.4" stroke="#555" stroke-width="0.5"/><rect x="472" y="478.8" width="2.8" height="4" stroke="#555" stroke-width="0.5"/>
<path d="M504.6,478 h5.4 v5.6 h-5.4z M507.3,478 v5.6" stroke="#555" stroke-width="0.5"/>
<rect x="524" y="477.8" width="4.6" height="6" stroke="#444" stroke-width="0.5" fill="#e8e8e8"/><path d="M525,479.6 h2.6 M525,481 h2.6 M525,482.4 h2.6" stroke="#444" stroke-width="0.4"/>
<rect x="541.4" y="477.8" width="6" height="5.6" stroke="#555" stroke-width="0.5"/><path d="M541.4,479.4 h6 M543,481 h3 M543,482.4 h2" stroke="#555" stroke-width="0.4"/><circle cx="546.6" cy="482.6" r="1.2" fill="#777"/>
<path d="M7.4,491.7 l3.3,-0.5 v3.3 h-3.3z M11.2,491.09999999999997 l3.9,-0.7 v4.1 h-3.9z M7.4,495.0 h3.3 v3.3 l-3.3,-0.5z M11.2,495.0 h3.9 v4.0 l-3.9,-0.7z" fill="#fff"/>
<rect x="33" y="489.6" width="8.4" height="11" rx="0.8" fill="#1a73c8"/><rect x="36" y="491" width="5.4" height="4" fill="#50b0f0"/><rect x="29" y="491.6" width="7" height="7" rx="0.8" fill="#0f5cab"/><circle cx="32.5" cy="495.1" r="1.8" stroke="#fff" stroke-width="0.9"/>
<path d="M52.6,491 h4 l1,1.1 h6 v7.6 h-11z" fill="#f7c948"/><rect x="52.6" y="493.4" width="11" height="6.3" fill="#ffd966"/><rect x="55" y="496" width="6.2" height="3.7" fill="#3f8fe0"/><rect x="56.2" y="495.2" width="3.8" height="1.4" fill="#a8d0f5"/>
<circle cx="80.6" cy="495.4" r="6" fill="#e8453c"/><path d="M80.6,495.4 L75.4,492.4 A6,6 0 0 0 81.2,501.4Z" fill="#34a853"/><path d="M80.6,495.4 L81.2,501.4 A6,6 0 0 0 86.4,493.6Z" fill="#fbbc05"/><circle cx="80.6" cy="495.4" r="2.7" fill="#fff"/><circle cx="80.6" cy="495.4" r="2.1" fill="#4285f4"/>
<circle cx="105.6" cy="491.6" r="1.6" fill="#5b67c9"/><circle cx="109" cy="492.4" r="1.2" fill="#5b67c9"/><rect x="102" y="493.6" width="7.6" height="6.6" rx="1.6" fill="#5b67c9"/><rect x="107" y="494" width="4" height="5" rx="1.4" fill="#4a55b8"/><rect x="97.6" y="491.6" width="7" height="7" rx="0.8" fill="#3f4aa8"/><path d="M99.4,493.6 h3.4 M101.1,493.6 v3.8" stroke="#fff" stroke-width="0.8"/><circle cx="108" cy="499.4" r="2.6" fill="#d8282f"/>
<text x="108" y="500.6" font-family="Liberation Sans, sans-serif" font-size="3.4" font-weight="700" fill="#fff" text-anchor="middle">S</text>
<rect x="123.6" y="489.8" width="9" height="11" rx="0.8" fill="#2b7cd3"/><rect x="123.6" y="489.8" width="9" height="3.6" fill="#41a5ee"/><rect x="123.6" y="497.2" width="9" height="3.6" fill="#185abd"/><rect x="120" y="492" width="7" height="7" rx="0.8" fill="#185abd"/>
<text x="123.5" y="497.6" font-family="Liberation Sans, sans-serif" font-size="5" font-weight="700" fill="#fff" text-anchor="middle">W</text>
<rect x="144" y="490.2" width="10.6" height="10.6" rx="1.6" fill="#d4281c"/><path d="M146.2,498.40000000000003 c2,-1.4 3,-4.4 3,-6 c0,-1 -1.2,-1 -1.2,0 c0,2 2.4,4.4 4.6,4.6 c1,0 1,-1.2 -0.2,-1.2 c-2,0 -4.6,1 -6.2,2.6z" stroke="#fff" stroke-width="0.7"/>
<path d="M533.6,496.6 l2,-2 l2,2" stroke="#fff" stroke-width="0.7"/>
<rect x="544" y="492.6" width="6.6" height="4.6" fill="#fff"/><rect x="546" y="497.6" width="6" height="1" fill="#fff"/><rect x="543.6" y="492.2" width="2" height="2" fill="#ddd"/>
<path d="M555.4,494.4 h1.6 l2,-1.8 v6 l-2,-1.8 h-1.6z" stroke="#ddd" stroke-width="0.5"/><path d="M560.4,493.4 c1.2,1.2 1.2,3 0,4.2" stroke="#999" stroke-width="0.5"/>
<path d="M620.4,491.6 h8.4 v6 h-5 l-1.6,1.8 v-1.8 h-1.8z" fill="#3a3a3a" stroke="#fff" stroke-width="0.7"/><path d="M622,493.4 h5.2 M622,495.2 h5.2" stroke="#ddd" stroke-width="0.5"/><circle cx="627.6" cy="498.6" r="2.6" fill="#1f1f1f" stroke="#fff" stroke-width="0.5"/>
<text x="627.6" y="499.9" font-family="Liberation Sans, sans-serif" font-size="3.4" fill="#fff" text-anchor="middle">2</text>
<path d="M636.4,486 v19" stroke="#777" stroke-width="0.5"/>
<path d="M646,491.9 l3.5,-0.5 v3.5 h-3.5z M650.0,491.29999999999995 l4.1,-0.7 v4.3 h-4.1z M646,495.4 h3.5 v3.5 l-3.5,-0.5z M650.0,495.4 h4.1 v4.2 l-4.1,-0.7z" fill="#fff"/>
<circle cx="675.6" cy="491.4" r="1.7" fill="#5b67c9"/><circle cx="679" cy="492.4" r="1.2" fill="#5b67c9"/><rect x="672" y="493.6" width="7.6" height="6.8" rx="1.6" fill="#5b67c9"/><rect x="667.6" y="491.6" width="7" height="7" rx="0.8" fill="#3f4aa8"/><path d="M669.4,493.6 h3.4 M671.1,493.6 v3.8" stroke="#fff" stroke-width="0.8"/>
<rect x="691.6" y="490.4" width="10" height="10" rx="1.6" fill="#d4281c"/><path d="M693.8000000000001,498.0 c2,-1.4 3,-4.4 3,-6 c0,-1 -1.2,-1 -1.2,0 c0,2 2.4,4.4 4.6,4.6 c1,0 1,-1.2 -0.2,-1.2 c-2,0 -4.6,1 -6.2,2.6z" stroke="#fff" stroke-width="0.7"/>
<rect x="640.4" y="1.6" width="6.6" height="7.4" rx="1.2" fill="#d4281c"/><path d="M642,7.6 c1.2,-1 1.8,-3 1.8,-4 c0,-0.8 -0.8,-0.8 -0.8,0 c0,1.4 1.6,3 3,3" stroke="#fff" stroke-width="0.6"/>
<path d="M1480,4.6 h4" stroke="#888" stroke-width="0.5"/><rect x="1501.4" y="3.4" width="2.8" height="2.8" stroke="#aaa" stroke-width="0.4"/><path d="M1502.4,3.4 v-0.8 h2.8 v2.8 h-1" stroke="#aaa" stroke-width="0.4"/><path d="M1522,2.6 l4,4 M1526,2.6 l-4,4" stroke="#666" stroke-width="0.5"/>
<circle cx="1523.2" cy="28.4" r="4" stroke="#555" stroke-width="0.6"/>
<text x="1523.2" y="30.1" font-family="Liberation Sans, sans-serif" font-size="4.6" font-weight="700" fill="#555" text-anchor="middle">?</text>
<path d="M645.4,43.4 h7.6 l2,2 v7.6 h-9.6z M647.4,43.4 v3 h5 v-3 M647,53 v-4 h6.4 v4" stroke="#bdbdbd" stroke-width="0.95"/>
<path d="M671.0,42.6 L672.5,46.6 L676.7,46.7 L673.4,49.4 L674.5,53.5 L671.0,51.1 L667.5,53.5 L668.6,49.4 L665.3,46.7 L669.5,46.6Z" stroke="#5a5a5a" stroke-width="1.05"/>
<rect x="687.6" y="43" width="7" height="3" stroke="#5a5a5a" stroke-width="1.05"/><rect x="685.4" y="46" width="11.4" height="5.4" rx="0.8" fill="#5a5a5a"/><rect x="688" y="49.6" width="6.2" height="4" fill="#fafafa" stroke="#5a5a5a" stroke-width="1.05"/>
<rect x="706.4" y="44" width="11" height="8" stroke="#5a5a5a" stroke-width="1.05"/><path d="M706.4,44 l5.5,4.4 l5.5,-4.4 M706.4,52 l4,-3.6 M717.4,52 l-4,-3.6" stroke="#5a5a5a" stroke-width="0.85"/>
<circle cx="732" cy="46.6" r="3.8" stroke="#5a5a5a" stroke-width="1.15"/><path d="M734.8,49.6 l3.8,3.8" stroke="#5a5a5a" stroke-width="1.35"/><path d="M730.4,46.6 h3.2" stroke="#5a5a5a" stroke-width="0.85"/>
<circle cx="980.2" cy="48" r="4.6" stroke="#b0b0b0" stroke-width="0.95"/><path d="M980.2,50.6 v-5 M978.2,47.4 l2,-2 l2,2" stroke="#b0b0b0" stroke-width="0.95"/>
<circle cx="1000.6" cy="48" r="4.6" stroke="#5a5a5a" stroke-width="0.95"/><path d="M1000.6,45.4 v5 M998.6,48.6 l2,2 l2,-2" stroke="#5a5a5a" stroke-width="0.95"/>
<path d="M1073.4,44 h8.4 v6 h-3.4 l-2,2.2 v-2.2 h-3z" stroke="#5a5a5a" stroke-width="1.15"/><path d="M1075,46 h5 M1075,47.8 h5" stroke="#5a5a5a" stroke-width="0.75"/>
<path d="M1094.4,51 l1.4,-3 l4.6,-5 l1.8,1.6 l-4.6,5.2z" stroke="#5a5a5a" stroke-width="1.05"/><path d="M1093,53 h9" stroke="#999" stroke-width="0.85"/>
<path d="M1114,51.6 c0,-3 2,-5 4,-5 c1.4,0 1.4,2 0,3.6 c-1,1.2 -2.6,1.8 -3.6,1.4 M1118.6,45.6 l2.6,-2.8 l1.4,1.4 l-2.6,2.8 M1120,52.6 l3.6,-1" stroke="#5a5a5a" stroke-width="1.05"/>
<path d="M1135.4,45.6 h5 l3.6,3.4 l-3.6,3.6 h-5z M1137,44.4 v-1 h3.6 M1134,47 h2 M1134,49 h2 M1134,51 h2" stroke="#5a5a5a" stroke-width="1.05"/>
<path d="M1156,45.6 h7.2 l-0.6,7.6 h-6z M1155,45.4 h9.2 M1158,45.2 v-1.4 h3.2 v1.4 M1158.4,47.4 v4 M1160.8,47.4 v4" stroke="#5a5a5a" stroke-width="0.95"/>
<path d="M1183.6,51 a4,4 0 1 0 -4.6,1.4 M1183.8,53.6 v-3 h-3" stroke="#5a5a5a" stroke-width="1.15"/>
<path d="M641,269.6 l3.4,3 l-3.4,3z" fill="#5a5a5a"/><path d="M1510.8,270.2 l-2.6,2.2 l2.6,2.2z" fill="#5a5a5a"/>
<path d="M1499.6,68.2 l1.8,-1.8 l1.8,1.8" stroke="#222" stroke-width="1"/><path d="M1499.6,481 l1.8,1.8 l1.8,-1.8" stroke="#222" stroke-width="1"/>
<circle cx="1524.8" cy="69.2" r="3.9" stroke="#555" stroke-width="0.9"/><path d="M1527.6,72.2 l2.6,2.6" stroke="#555" stroke-width="1.1"/><path d="M1523.0,69.2 h3.6" stroke="#555" stroke-width="0.7"/>
<path d="M1518.7,81.6 h12.8" stroke="#d8d8d8" stroke-width="0.6"/>
<path d="M1521.2,87 h5 l2.6,2.6 v7.4 h-7.6z" stroke="#e0503a" stroke-width="1.1" fill="#fbd9c8"/><circle cx="1528.2" cy="95" r="2.5" fill="#e0305a" stroke="#fff" stroke-width="0.4"/>
<rect x="1520.6" y="107.4" width="6.4" height="7" fill="#4a5fe0"/><rect x="1524.6" y="109" width="5.4" height="6.6" fill="#6a5fd8"/><path d="M1522.2,109.4 h3 M1522.2,111.4 h2" stroke="#fff" stroke-width="0.6"/><path d="M1523.4,116.8 l1.8,1.6 l1.8,-1.6" stroke="#4a5fe0" stroke-width="0.9"/>
<rect x="1520.8" y="130.6" width="9" height="3.8" stroke="#d83f8a" stroke-width="1.1" fill="#f6c6dc"/><rect x="1520.8" y="136" width="3.8" height="3.6" stroke="#d83f8a" stroke-width="1.1"/><path d="M1526.2,136.6 h3.6 M1526.2,139 h3.6" stroke="#d83f8a" stroke-width="0.9"/>
<path d="M1521.0,159.6 l1.2,-3.4 l5,-5.6 l2.4,2 l-5,5.8z" stroke="#7b55c7" stroke-width="1.1" fill="#d8caf0"/><path d="M1520.6,161.4 h9.6" stroke="#7b55c7" stroke-width="0.9"/>
<path d="M1521.2,173.4 h5 l2.6,2.6 v7.4 h-7.6z" stroke="#2f7f9a" stroke-width="1.1" fill="#d6ecf2"/><circle cx="1528.2" cy="181.4" r="2.5" fill="#2f8fa8" stroke="#fff" stroke-width="0.4"/>
<rect x="1521.0" y="195" width="8.4" height="9.6" stroke="#4caf50" stroke-width="0.9" stroke-dasharray="1.4 0.8" fill="#dff0d8"/><rect x="1524.8" y="196.4" width="3.6" height="6.8" fill="#4caf50"/>
<path d="M1521.2,216 h5 l2.6,2.6 v7.4 h-7.6z" stroke="#f0a81f" stroke-width="1.1" fill="#f7c85a"/>
<rect x="1525.6" y="221.6" width="4.6" height="4.6" fill="#f0a81f"/>
<path d="M1520.6,238.4 h9.4 v6.4 h-4.8 l-2.2,2.4 v-2.4 h-2.4z" fill="#f5b82a"/>
<rect x="1522.4" y="258.8" width="5.8" height="3.2" stroke="#2f9a48" stroke-width="0.9" fill="#fff"/><rect x="1520.4" y="261.8" width="9.8" height="5" rx="0.8" fill="#2f9a48"/><rect x="1522.4" y="265" width="5.8" height="3.8" fill="#fff" stroke="#2f9a48" stroke-width="0.8"/>
<path d="M1525.2,281 l4.2,1.4 v4.2 c0,2.8 -2,4.6 -4.2,5.4 c-2.2,-0.8 -4.2,-2.6 -4.2,-5.4 v-4.2z" stroke="#4a6fe0" stroke-width="1.1" fill="#e0e6fb"/>
<path d="M1521.2,302.6 h5 l2.6,2.6 v7.4 h-7.6z" stroke="#c030a8" stroke-width="1.1" fill="#f0c8e8"/>
<rect x="1522.8" y="308" width="4.6" height="3" fill="#c030a8"/>
<path d="M1523.6,328.2 v-2.8 a1.8,1.8 0 1 1 3.2,0 v2.8 h2.8 v2.8 h-8.8 v-2.8z" stroke="#5a55c8" stroke-width="1" fill="#d8d6f4"/><path d="M1520.6,333.6 h9.2" stroke="#5a55c8" stroke-width="1"/>
<rect x="1520.4" y="346" width="9.8" height="8" rx="0.8" stroke="#d83a6a" stroke-width="1.1" fill="#f8ccd8"/><path d="M1520.4,349 h9.8 M1522.8,351.6 h5" stroke="#d83a6a" stroke-width="0.9"/>
<path d="M1521.0,374.4 l1.2,-3.2 l5.4,-4 l1.8,2.2 l-5.4,4.2z" fill="#e0406a"/><path d="M1520.4,376.4 h9.8" stroke="#d83a5a" stroke-width="1"/>
<path d="M1521.2,388.8 l6.4,6.4 M1528.8,388.4 l-3.4,3.4" stroke="#555" stroke-width="1.1"/><circle cx="1527.2" cy="396" r="2.2" stroke="#555" stroke-width="1" fill="#fff"/>
<path d="M1523.9,471.6 v7.4" stroke="#555" stroke-width="1.5"/><path d="M1525.4,475.3 h4.6 M1528,473.3 l2,2 l-2,2" stroke="#555" stroke-width="0.9"/>
</svg>
</div>
</body></html>
